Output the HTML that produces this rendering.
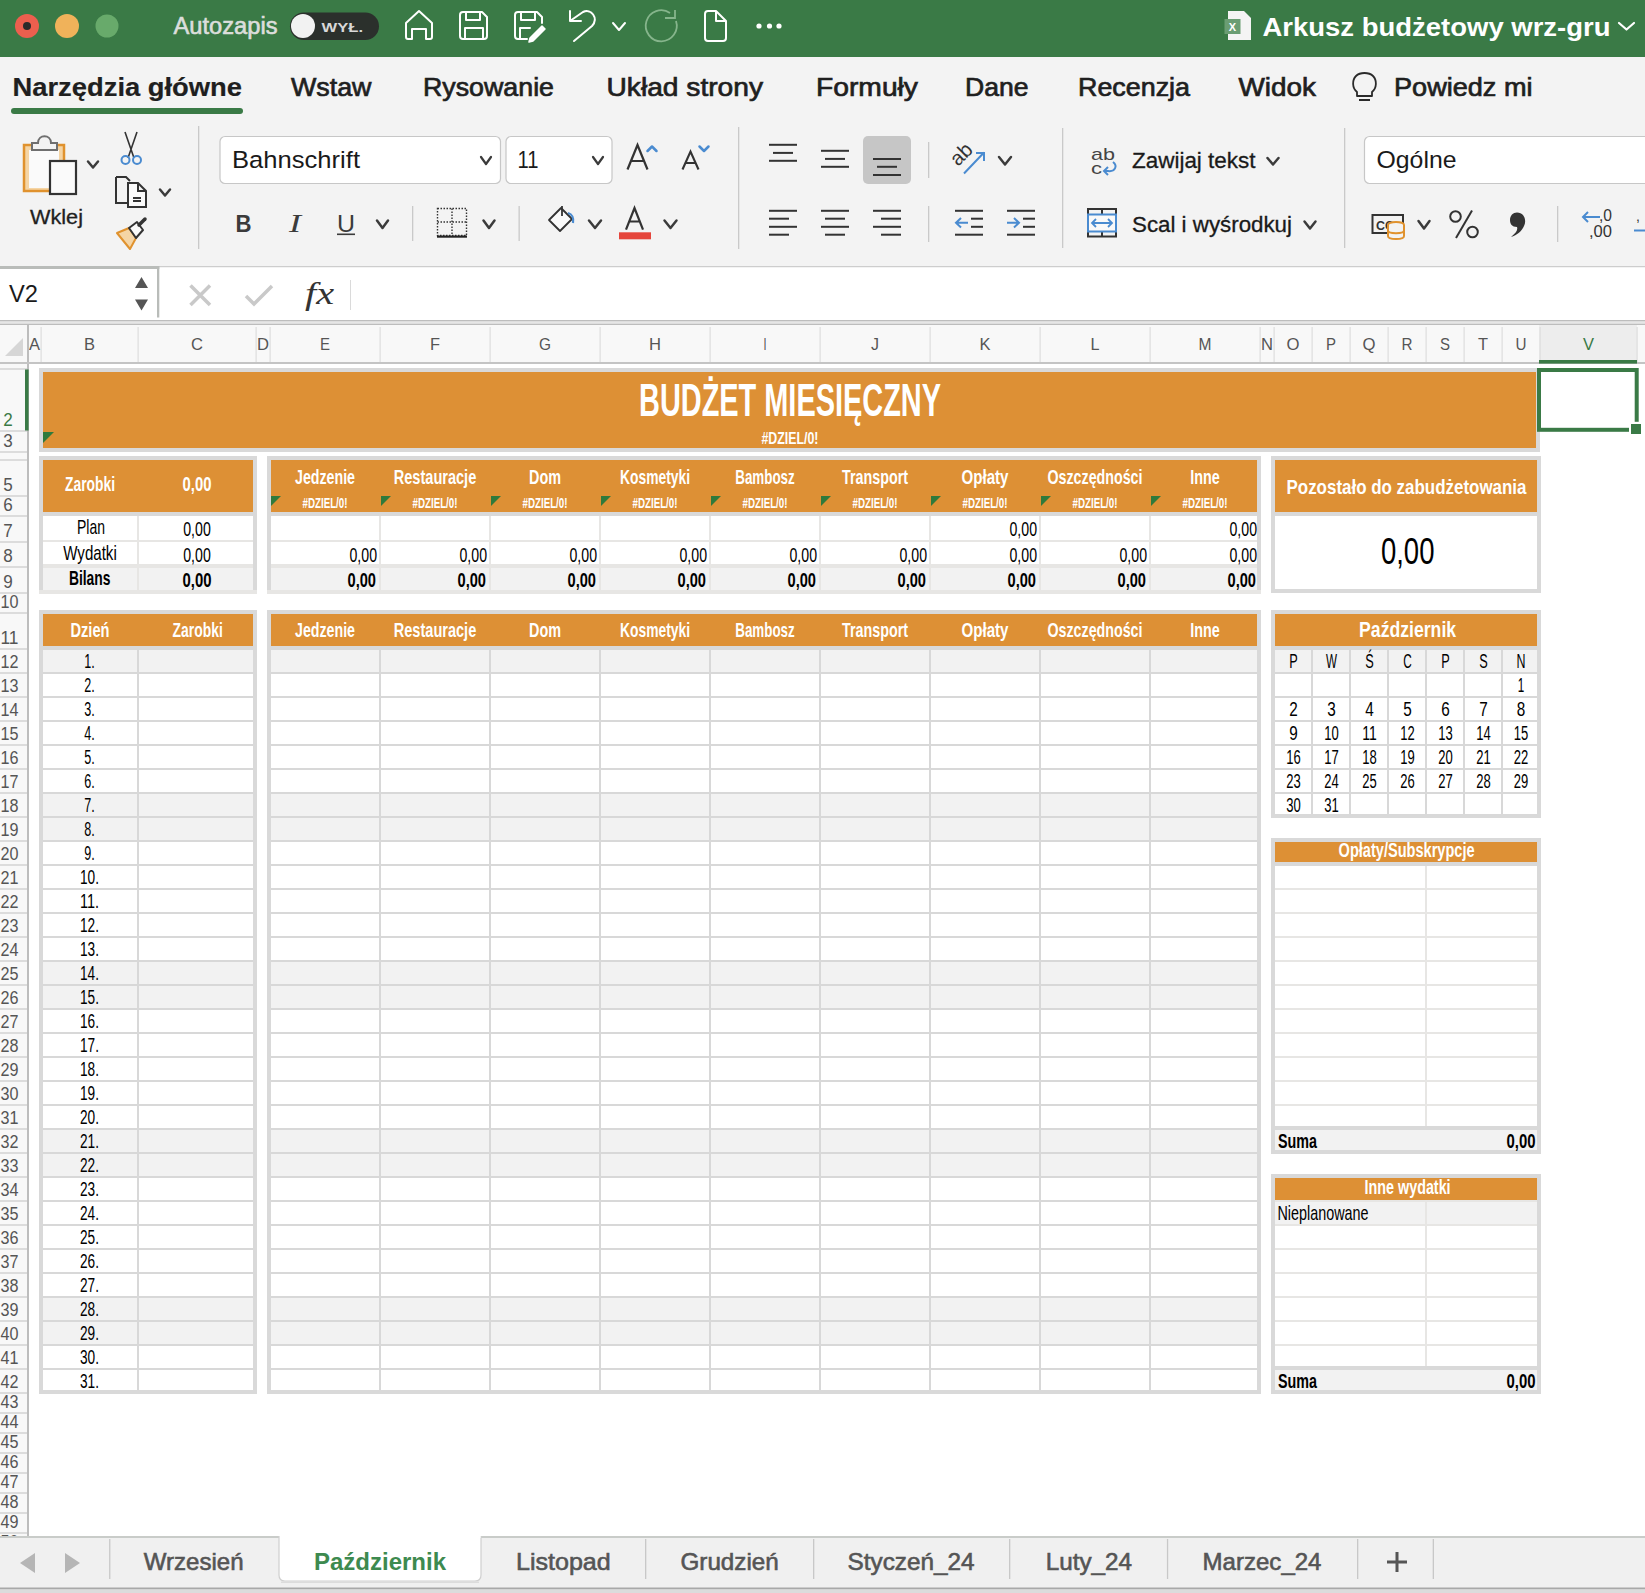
<!DOCTYPE html>
<html><head><meta charset="utf-8"><title>Excel</title>
<style>html,body{margin:0;padding:0;background:#fff;overflow:hidden;} svg{display:block;font-family:"Liberation Sans",sans-serif;}</style>
</head><body><svg width="1645" height="1593" viewBox="0 0 1645 1593"><rect x="0" y="0" width="1645" height="57" fill="#3a7a46" />
<circle cx="27" cy="26" r="12" fill="#ec5f4e"/>
<circle cx="27" cy="26" r="4" fill="#2a2a2a"/>
<circle cx="67" cy="26" r="12" fill="#f0b25a"/>
<circle cx="107" cy="26" r="11.5" fill="#68aa6b"/>
<text x="173.5" y="34" font-family="Liberation Sans" font-size="23" font-weight="normal" fill="#dcdedc" text-anchor="start" textLength="104" lengthAdjust="spacingAndGlyphs"  stroke="#dcdedc" stroke-width="0.6">Autozapis</text>
<rect x="290" y="12.5" width="89" height="27.5" rx="13.75" fill="#2b302c"/>
<circle cx="303" cy="26" r="12" fill="#f2f2f2"/>
<text x="321.5" y="31.5" font-family="Liberation Sans" font-size="13.5" font-weight="bold" fill="#d8d8d8" text-anchor="start" textLength="41.5" lengthAdjust="spacingAndGlyphs" >WYŁ.</text>
<path d="M406 23 L419 11 L432 23 V37 a2 2 0 0 1 -2 2 H426 V29 H412 V39 H408 a2 2 0 0 1 -2 -2 Z" stroke="#ffffff" stroke-width="2" fill="none" stroke-linejoin="round" stroke-linecap="round"/>
<path d="M460 15 a3 3 0 0 1 3 -3 H482 L487 17 V36 a3 3 0 0 1 -3 3 H463 a3 3 0 0 1 -3 -3 Z M466 12 V20 H480 V12 M465 39 V28 H483 V39" stroke="#ffffff" stroke-width="2" fill="none" stroke-linejoin="round" stroke-linecap="round"/>
<path d="M515 15 a3 3 0 0 1 3 -3 H537 L542 17 V23 M521 12 V20 H535 V12 M520 39 V28 H530 M518 39 a3 3 0 0 1 -3 -3 V15 M518 39 H527" stroke="#ffffff" stroke-width="2" fill="none" stroke-linejoin="round" stroke-linecap="round"/>
<path d="M530 38 L542 26 L545 29 L533 41 L529 42 Z" fill="#ffffff" stroke="#ffffff" stroke-width="1.5" stroke-linejoin="round"/>
<path d="M570 11 V21 H581 M570 21 L583 12 C591 8 599 18 592 26 L574 41" stroke="#ffffff" stroke-width="2" fill="none" stroke-linejoin="round" stroke-linecap="round"/>
<path d="M613 23 L619.0 30 L625 23" stroke="#ffffff" stroke-width="2" fill="none" stroke-linecap="round" stroke-linejoin="round"/>
<path d="M676 21 A15.5 15.5 0 1 1 670 13" stroke="#86b58c" stroke-width="1.8" fill="none"/>
<path d="M665 18 H675 V10" stroke="#86b58c" stroke-width="1.8" fill="none"/>
<path d="M705 14 a3 3 0 0 1 3 -3 H716 L726 21 V38 a3 3 0 0 1 -3 3 H708 a3 3 0 0 1 -3 -3 Z M716 11 V21 H726" stroke="#ffffff" stroke-width="2" fill="none" stroke-linejoin="round" stroke-linecap="round"/>
<circle cx="759" cy="26" r="2.6" fill="#ffffff"/>
<circle cx="769.5" cy="26" r="2.6" fill="#ffffff"/>
<circle cx="779" cy="26" r="2.6" fill="#ffffff"/>
<path d="M1228 11 H1244 L1251 18 V40 H1228 Z" fill="#f4f4f4"/>
<rect x="1224.5" y="19" width="16" height="15" fill="#6a9d73"/>
<text x="1232.5" y="31" font-family="Liberation Sans" font-size="11" font-weight="bold" fill="#ffffff" text-anchor="middle" >X</text>
<text x="1262.5" y="36" font-family="Liberation Sans" font-size="25.5" font-weight="bold" fill="#ffffff" text-anchor="start" textLength="348" lengthAdjust="spacingAndGlyphs" >Arkusz budżetowy wrz-gru</text>
<path d="M1619 23 L1626.5 29.5 L1634 23" stroke="#ffffff" stroke-width="2.2" fill="none" stroke-linecap="round" stroke-linejoin="round"/>
<rect x="0" y="57" width="1645" height="210" fill="#f3f3f3" />
<text x="12.5" y="96" font-family="Liberation Sans" font-size="25.5" font-weight="bold" fill="#1f1f1f" text-anchor="start" textLength="229.5" lengthAdjust="spacingAndGlyphs"  stroke="#1f1f1f" stroke-width="0.2">Narzędzia główne</text>
<text x="291" y="96" font-family="Liberation Sans" font-size="25.5" font-weight="normal" fill="#1f1f1f" text-anchor="start" textLength="80.5" lengthAdjust="spacingAndGlyphs"  stroke="#1f1f1f" stroke-width="0.7">Wstaw</text>
<text x="423" y="96" font-family="Liberation Sans" font-size="25.5" font-weight="normal" fill="#1f1f1f" text-anchor="start" textLength="131" lengthAdjust="spacingAndGlyphs"  stroke="#1f1f1f" stroke-width="0.7">Rysowanie</text>
<text x="606.5" y="96" font-family="Liberation Sans" font-size="25.5" font-weight="normal" fill="#1f1f1f" text-anchor="start" textLength="156.5" lengthAdjust="spacingAndGlyphs"  stroke="#1f1f1f" stroke-width="0.7">Układ strony</text>
<text x="816" y="96" font-family="Liberation Sans" font-size="25.5" font-weight="normal" fill="#1f1f1f" text-anchor="start" textLength="102" lengthAdjust="spacingAndGlyphs"  stroke="#1f1f1f" stroke-width="0.7">Formuły</text>
<text x="965" y="96" font-family="Liberation Sans" font-size="25.5" font-weight="normal" fill="#1f1f1f" text-anchor="start" textLength="63.5" lengthAdjust="spacingAndGlyphs"  stroke="#1f1f1f" stroke-width="0.7">Dane</text>
<text x="1078" y="96" font-family="Liberation Sans" font-size="25.5" font-weight="normal" fill="#1f1f1f" text-anchor="start" textLength="112" lengthAdjust="spacingAndGlyphs"  stroke="#1f1f1f" stroke-width="0.7">Recenzja</text>
<text x="1238.5" y="96" font-family="Liberation Sans" font-size="25.5" font-weight="normal" fill="#1f1f1f" text-anchor="start" textLength="77.5" lengthAdjust="spacingAndGlyphs"  stroke="#1f1f1f" stroke-width="0.7">Widok</text>
<text x="1394" y="96" font-family="Liberation Sans" font-size="25.5" font-weight="normal" fill="#1f1f1f" text-anchor="start" textLength="138.5" lengthAdjust="spacingAndGlyphs"  stroke="#1f1f1f" stroke-width="0.7">Powiedz mi</text>
<rect x="11" y="108" width="232" height="6" rx="3" fill="#3a7a46"/>
<path d="M1357 92 C1352 88 1352 80 1356 76 C1360 72 1369 72 1373 76 C1377 80 1377 88 1372 92 V96 H1357 Z M1359 100 H1370" stroke="#2a2a2a" stroke-width="1.8" fill="none" stroke-linejoin="round"/>
<rect x="198" y="126" width="1.3" height="123" fill="#c9c9c9" />
<rect x="738" y="127" width="1.3" height="122" fill="#c9c9c9" />
<rect x="1062" y="128" width="1.3" height="120" fill="#c9c9c9" />
<rect x="1344" y="128" width="1.3" height="120" fill="#c9c9c9" />
<rect x="412" y="206" width="1.3" height="35" fill="#c9c9c9" />
<rect x="518.5" y="206" width="1.3" height="35" fill="#c9c9c9" />
<rect x="928" y="142" width="1.3" height="36" fill="#c9c9c9" />
<rect x="928" y="206" width="1.3" height="36" fill="#c9c9c9" />
<rect x="1557" y="206" width="1.3" height="36" fill="#c9c9c9" />
<rect x="24" y="145" width="40" height="46" fill="#f5d5a5" stroke="#e0922e" stroke-width="2.5"/>
<rect x="29" y="150" width="30" height="38" fill="#fafafa"/>
<path d="M32 150 V143 H38 C38 134 51 134 51 143 H57 V150 Z" fill="#f3f3f3" stroke="#6f6f6f" stroke-width="2"/>
<rect x="50" y="161" width="26" height="33" fill="#fafafa" stroke="#333" stroke-width="2.2"/>
<path d="M88 161.5 L93.0 167.5 L98 161.5" stroke="#3b3b3b" stroke-width="2.5" fill="none" stroke-linecap="round" stroke-linejoin="round"/>
<text x="30" y="223.5" font-family="Liberation Sans" font-size="19.5" font-weight="normal" fill="#1f1f1f" text-anchor="start" textLength="53" lengthAdjust="spacingAndGlyphs"  stroke="#1f1f1f" stroke-width="0.3">Wklej</text>
<path d="M125 132 L134 158 M137 132 L128 158" stroke="#333" stroke-width="1.6" fill="none"/>
<circle cx="125.5" cy="160" r="4" stroke="#4a8bd0" stroke-width="2" fill="none"/>
<circle cx="137" cy="160" r="4" stroke="#4a8bd0" stroke-width="2" fill="none"/>
<path d="M116 177 H126 L130 181 M116 177 V203 H127" stroke="#333" stroke-width="2" fill="none"/>
<path d="M128 183 H138 L146 191 V207 H128 Z M138 183 V191 H146 M133 198 H141 M133 201 H141" stroke="#333" stroke-width="2" fill="#fafafa"/>
<path d="M160 189.5 L165.0 195.5 L170 189.5" stroke="#3b3b3b" stroke-width="2.5" fill="none" stroke-linecap="round" stroke-linejoin="round"/>
<path d="M117 233 L129 228 L136 238 L130 249 Z" fill="#f5d5a5" stroke="#e0922e" stroke-width="2" stroke-linejoin="round"/>
<path d="M129 228 L137 222 L143 230 L136 238 Z" fill="#fafafa" stroke="#333" stroke-width="2" stroke-linejoin="round"/>
<path d="M139 225 L145 219" stroke="#333" stroke-width="3.5" stroke-linecap="round"/>
<rect x="220" y="136.5" width="280.5" height="47" rx="5" fill="#ffffff" stroke="#c7c7c7" stroke-width="1.2"/>
<text x="232" y="168" font-family="Liberation Sans" font-size="24.5" font-weight="normal" fill="#1a1a1a" text-anchor="start" textLength="128" lengthAdjust="spacingAndGlyphs" >Bahnschrift</text>
<path d="M481 157 L486.0 164 L491 157" stroke="#3b3b3b" stroke-width="2.2" fill="none" stroke-linecap="round" stroke-linejoin="round"/>
<rect x="506" y="136.5" width="106" height="47" rx="5" fill="#ffffff" stroke="#c7c7c7" stroke-width="1.2"/>
<text x="517.5" y="168" font-family="Liberation Sans" font-size="24.5" font-weight="normal" fill="#1a1a1a" text-anchor="start" textLength="21" lengthAdjust="spacingAndGlyphs" >11</text>
<path d="M593 157 L598.0 164 L603 157" stroke="#3b3b3b" stroke-width="2.2" fill="none" stroke-linecap="round" stroke-linejoin="round"/>
<path d="M627.5 169.5 L637.5 145 L647.5 169.5 M631.2 161 H643.8" stroke="#333" stroke-width="2.2" fill="none"/>
<path d="M647.5 151 L652.0 146.5 L656.5 151" stroke="#4a8bd0" stroke-width="2.5" fill="none" stroke-linecap="round" stroke-linejoin="round"/>
<path d="M682.5 169.5 L690.5 151.5 L698.5 169.5 M685.3 163 H695.7" stroke="#333" stroke-width="2.1" fill="none"/>
<path d="M699.5 146.5 L704.0 151 L708.5 146.5" stroke="#4a8bd0" stroke-width="2.5" fill="none" stroke-linecap="round" stroke-linejoin="round"/>
<text x="235.5" y="231.5" font-family="Liberation Sans" font-size="24" font-weight="bold" fill="#3b3b3b" text-anchor="start" textLength="16" lengthAdjust="spacingAndGlyphs" >B</text>
<text x="289" y="231.5" font-family="Liberation Serif" font-size="25" font-weight="normal" fill="#3b3b3b" text-anchor="start" textLength="12" lengthAdjust="spacingAndGlyphs" font-style="italic">I</text>
<text x="337" y="231.5" font-family="Liberation Sans" font-size="24" font-weight="normal" fill="#3b3b3b" text-anchor="start" textLength="18" lengthAdjust="spacingAndGlyphs" >U</text>
<rect x="337" y="233.5" width="18" height="1.6" fill="#3b3b3b" />
<path d="M377 220.5 L382.5 228 L388 220.5" stroke="#3b3b3b" stroke-width="2.5" fill="none" stroke-linecap="round" stroke-linejoin="round"/>
<rect x="437.5" y="208.5" width="29" height="27" fill="none" stroke="#333" stroke-width="1.4" stroke-dasharray="1.5 1.5"/>
<path d="M452 208.5 V235.5 M437.5 222 H466.5" stroke="#333" stroke-width="1.4" stroke-dasharray="1.5 1.5"/>
<rect x="437" y="235.5" width="30" height="2.2" fill="#222" />
<path d="M483.5 220.5 L489.0 228 L494.5 220.5" stroke="#3b3b3b" stroke-width="2.5" fill="none" stroke-linecap="round" stroke-linejoin="round"/>
<path d="M549 220 L561 208 L572 219 L560 231 Z" fill="#fafafa" stroke="#333" stroke-width="1.8" stroke-linejoin="round"/>
<path d="M562 206 V216" stroke="#333" stroke-width="1.8"/>
<path d="M568 213 C572 214 574 218 573 223" stroke="#4a8bd0" stroke-width="2.2" fill="none"/>
<path d="M589 220.5 L595.0 228 L601 220.5" stroke="#3b3b3b" stroke-width="2.5" fill="none" stroke-linecap="round" stroke-linejoin="round"/>
<path d="M626 229.7 L634.5 208 L643 229.7 M629.2 221.5 H639.8" stroke="#333" stroke-width="2.2" fill="none"/>
<rect x="619" y="232.3" width="32" height="7" fill="#e5453b" />
<path d="M664.5 220.5 L670.5 228 L676.5 220.5" stroke="#3b3b3b" stroke-width="2.5" fill="none" stroke-linecap="round" stroke-linejoin="round"/>
<rect x="863" y="136" width="48" height="48" fill="#c6c6c6" rx="5"/>
<rect x="769" y="143.8" width="28" height="2" fill="#333" />
<rect x="773" y="151.9" width="20" height="2" fill="#333" />
<rect x="769" y="159.8" width="28" height="2" fill="#333" />
<rect x="821" y="149.8" width="28" height="2" fill="#333" />
<rect x="825" y="157.9" width="20" height="2" fill="#333" />
<rect x="821" y="165.8" width="28" height="2" fill="#333" />
<rect x="873" y="158" width="28" height="2" fill="#333" />
<rect x="877" y="165.8" width="20" height="2" fill="#333" />
<rect x="873" y="174" width="28" height="2" fill="#333" />
<rect x="769" y="209.8" width="28" height="2" fill="#333" />
<rect x="769" y="217.7" width="20" height="2" fill="#333" />
<rect x="769" y="225.8" width="28" height="2" fill="#333" />
<rect x="769" y="233.7" width="20" height="2" fill="#333" />
<rect x="821" y="209.8" width="28" height="2" fill="#333" />
<rect x="825" y="217.7" width="20" height="2" fill="#333" />
<rect x="821" y="225.8" width="28" height="2" fill="#333" />
<rect x="825" y="233.7" width="20" height="2" fill="#333" />
<rect x="873" y="209.8" width="28" height="2" fill="#333" />
<rect x="881" y="217.7" width="20" height="2" fill="#333" />
<rect x="873" y="225.8" width="28" height="2" fill="#333" />
<rect x="881" y="233.7" width="20" height="2" fill="#333" />
<rect x="955" y="209.8" width="28" height="2" fill="#333" />
<rect x="971" y="217.7" width="12" height="2" fill="#333" />
<rect x="971" y="225.8" width="12" height="2" fill="#333" />
<rect x="955" y="233.7" width="28" height="2" fill="#333" />
<path d="M968 222.8 H956 M961 218 L956 222.8 L961 227.5" stroke="#4a8bd0" stroke-width="2" fill="none"/>
<rect x="1007" y="209.8" width="28" height="2" fill="#333" />
<rect x="1023" y="217.7" width="12" height="2" fill="#333" />
<rect x="1023" y="225.8" width="12" height="2" fill="#333" />
<rect x="1007" y="233.7" width="28" height="2" fill="#333" />
<path d="M1007 222.8 H1019 M1014 218 L1019 222.8 L1014 227.5" stroke="#4a8bd0" stroke-width="2" fill="none"/>
<text x="0" y="0" font-family="Liberation Sans" font-size="20.5" fill="#333" transform="translate(958,167) rotate(-45)">ab</text>
<path d="M964 173.5 L984 152.5 M976 153 H984 V161" stroke="#4a8bd0" stroke-width="2" fill="none"/>
<path d="M999 157 L1005.0 164.5 L1011 157" stroke="#3b3b3b" stroke-width="2.5" fill="none" stroke-linecap="round" stroke-linejoin="round"/>
<text x="1091" y="159.5" font-family="Liberation Sans" font-size="17" font-weight="normal" fill="#444" text-anchor="start" textLength="24" lengthAdjust="spacingAndGlyphs" >ab</text>
<text x="1091" y="174" font-family="Liberation Sans" font-size="17" font-weight="normal" fill="#444" text-anchor="start" textLength="11" lengthAdjust="spacingAndGlyphs" >c</text>
<path d="M1113 162 C1118 166 1115 172 1108 171 H1104 M1108 167 L1104 171 L1108 175" stroke="#4a8bd0" stroke-width="2" fill="none"/>
<text x="1132" y="168" font-family="Liberation Sans" font-size="21.5" font-weight="normal" fill="#1a1a1a" text-anchor="start" textLength="123.5" lengthAdjust="spacingAndGlyphs"  stroke="#1a1a1a" stroke-width="0.3">Zawijaj tekst</text>
<path d="M1267.5 158 L1273.0 164.5 L1278.5 158" stroke="#3b3b3b" stroke-width="2.5" fill="none" stroke-linecap="round" stroke-linejoin="round"/>
<rect x="1088" y="209" width="28" height="27.5" fill="none" stroke="#333" stroke-width="2"/>
<path d="M1102 209 V214 M1102 231.5 V236.5" stroke="#333" stroke-width="2"/>
<rect x="1088" y="214.5" width="28" height="17" fill="#f9f9f9" stroke="#4a8bd0" stroke-width="2"/>
<path d="M1092 223 H1112 M1096 219 L1092 223 L1096 227 M1108 219 L1112 223 L1108 227" stroke="#4a8bd0" stroke-width="1.8" fill="none"/>
<text x="1132" y="231.7" font-family="Liberation Sans" font-size="21.5" font-weight="normal" fill="#1a1a1a" text-anchor="start" textLength="160" lengthAdjust="spacingAndGlyphs"  stroke="#1a1a1a" stroke-width="0.3">Scal i wyśrodkuj</text>
<path d="M1304.5 221.5 L1310.0 228.5 L1315.5 221.5" stroke="#3b3b3b" stroke-width="2.5" fill="none" stroke-linecap="round" stroke-linejoin="round"/>
<rect x="1364.5" y="136.5" width="300" height="47" rx="5" fill="#ffffff" stroke="#c7c7c7" stroke-width="1.2"/>
<text x="1376.5" y="168" font-family="Liberation Sans" font-size="24.5" font-weight="normal" fill="#1a1a1a" text-anchor="start" textLength="80" lengthAdjust="spacingAndGlyphs" >Ogólne</text>
<rect x="1372.5" y="215" width="30.5" height="18" fill="none" stroke="#333" stroke-width="2"/>
<text x="1376" y="230" font-family="Liberation Sans" font-size="12" font-weight="bold" fill="#333" text-anchor="start" textLength="18" lengthAdjust="spacingAndGlyphs" >CC</text>
<ellipse cx="1396" cy="225" rx="8" ry="3" fill="#f3f3f3" stroke="#e0922e" stroke-width="2"/>
<path d="M1388 225 V236 C1388 240 1404 240 1404 236 V225 M1388 230.5 C1388 234 1404 234 1404 230.5" stroke="#e0922e" stroke-width="2" fill="#f3f3f3"/>
<path d="M1418.5 221 L1424.0 228.5 L1429.5 221" stroke="#3b3b3b" stroke-width="2.5" fill="none" stroke-linecap="round" stroke-linejoin="round"/>
<circle cx="1455.5" cy="216.5" r="5.3" stroke="#333" stroke-width="2" fill="none"/><circle cx="1472.5" cy="232" r="5.3" stroke="#333" stroke-width="2" fill="none"/><path d="M1472 210.5 L1456 238" stroke="#333" stroke-width="2"/>
<path d="M1517 212.5 C1524 212.5 1527 220 1524 226 C1522 231 1517 235 1511 237 C1516 233 1518 230 1517 227 C1512 227 1510 224 1510 220 C1510 215.5 1513 212.5 1517 212.5 Z" fill="#333"/>
<path d="M1600 217 H1583 M1588 212 L1583 217 L1588 222" stroke="#4a8bd0" stroke-width="2" fill="none"/>
<text x="1599" y="220.6" font-family="Liberation Sans" font-size="17" font-weight="normal" fill="#333" text-anchor="start" textLength="13" lengthAdjust="spacingAndGlyphs" >,0</text>
<text x="1589" y="237.4" font-family="Liberation Sans" font-size="17" font-weight="normal" fill="#333" text-anchor="start" textLength="23" lengthAdjust="spacingAndGlyphs" >,00</text>
<path d="M1634 230.5 H1645" stroke="#4a8bd0" stroke-width="2" fill="none"/>
<text x="1636" y="221" font-family="Liberation Sans" font-size="14" font-weight="normal" fill="#333" text-anchor="start" >,</text>
<rect x="0" y="266" width="1645" height="1.5" fill="#cdcdcd" />
<rect x="0" y="267.5" width="1645" height="53" fill="#ffffff" />
<rect x="0" y="266" width="159.3" height="3" fill="#b9bcb9" />
<rect x="157" y="266" width="2.3" height="51.5" fill="#b9bcb9" />
<text x="9" y="301.5" font-family="Liberation Sans" font-size="24" font-weight="normal" fill="#1a1a1a" text-anchor="start" textLength="29" lengthAdjust="spacingAndGlyphs" >V2</text>
<path d="M135 288 L141.5 277 L148 288 Z M135 299.5 L141.5 310.5 L148 299.5 Z" fill="#555"/>
<path d="M190.5 285.5 L210 305 M210 285.5 L190.5 305" stroke="#c9c9c9" stroke-width="3.5"/>
<path d="M246 296 L254 304 L272 286" stroke="#c9c9c9" stroke-width="3.5" fill="none"/>
<text x="305" y="304" font-family="Liberation Serif" font-size="32" font-weight="normal" fill="#333" text-anchor="start" textLength="29" lengthAdjust="spacingAndGlyphs" font-style="italic">fx</text>
<rect x="350" y="280" width="1" height="30" fill="#dadada" />
<rect x="0" y="320" width="1645" height="5" fill="#e6e6e6" />
<rect x="0" y="320" width="1645" height="1.2" fill="#bdbdbd" />
<rect x="0" y="323.8" width="1645" height="1.2" fill="#bdbdbd" />
<rect x="0" y="325" width="1645" height="37" fill="#f8f8f8" />
<rect x="1539" y="325" width="98" height="35" fill="#ededed" />
<rect x="40.5" y="327" width="1.2" height="35" fill="#dddddd" />
<rect x="137.5" y="327" width="1.2" height="35" fill="#dddddd" />
<rect x="255.5" y="327" width="1.2" height="35" fill="#dddddd" />
<rect x="269.5" y="327" width="1.2" height="35" fill="#dddddd" />
<rect x="379.5" y="327" width="1.2" height="35" fill="#dddddd" />
<rect x="489.5" y="327" width="1.2" height="35" fill="#dddddd" />
<rect x="599.5" y="327" width="1.2" height="35" fill="#dddddd" />
<rect x="709.5" y="327" width="1.2" height="35" fill="#dddddd" />
<rect x="819.5" y="327" width="1.2" height="35" fill="#dddddd" />
<rect x="929.5" y="327" width="1.2" height="35" fill="#dddddd" />
<rect x="1039.5" y="327" width="1.2" height="35" fill="#dddddd" />
<rect x="1149.5" y="327" width="1.2" height="35" fill="#dddddd" />
<rect x="1259.5" y="327" width="1.2" height="35" fill="#dddddd" />
<rect x="1273.5" y="327" width="1.2" height="35" fill="#dddddd" />
<rect x="1311.5" y="327" width="1.2" height="35" fill="#dddddd" />
<rect x="1349.5" y="327" width="1.2" height="35" fill="#dddddd" />
<rect x="1387.5" y="327" width="1.2" height="35" fill="#dddddd" />
<rect x="1425.5" y="327" width="1.2" height="35" fill="#dddddd" />
<rect x="1463.5" y="327" width="1.2" height="35" fill="#dddddd" />
<rect x="1501.5" y="327" width="1.2" height="35" fill="#dddddd" />
<rect x="1539.5" y="327" width="1.2" height="35" fill="#dddddd" />
<rect x="1636.5" y="327" width="1.2" height="35" fill="#dddddd" />
<text x="34.5" y="349.7" font-family="Liberation Sans" font-size="17" font-weight="normal" fill="#555555" text-anchor="middle" textLength="11" lengthAdjust="spacingAndGlyphs" >A</text>
<text x="89.5" y="349.7" font-family="Liberation Sans" font-size="17" font-weight="normal" fill="#555555" text-anchor="middle" textLength="11" lengthAdjust="spacingAndGlyphs" >B</text>
<text x="197.0" y="349.7" font-family="Liberation Sans" font-size="17" font-weight="normal" fill="#555555" text-anchor="middle" textLength="12" lengthAdjust="spacingAndGlyphs" >C</text>
<text x="263.0" y="349.7" font-family="Liberation Sans" font-size="17" font-weight="normal" fill="#555555" text-anchor="middle" textLength="12" lengthAdjust="spacingAndGlyphs" >D</text>
<text x="325.0" y="349.7" font-family="Liberation Sans" font-size="17" font-weight="normal" fill="#555555" text-anchor="middle" textLength="10" lengthAdjust="spacingAndGlyphs" >E</text>
<text x="435.0" y="349.7" font-family="Liberation Sans" font-size="17" font-weight="normal" fill="#555555" text-anchor="middle" textLength="10" lengthAdjust="spacingAndGlyphs" >F</text>
<text x="545.0" y="349.7" font-family="Liberation Sans" font-size="17" font-weight="normal" fill="#555555" text-anchor="middle" textLength="12" lengthAdjust="spacingAndGlyphs" >G</text>
<text x="655.0" y="349.7" font-family="Liberation Sans" font-size="17" font-weight="normal" fill="#555555" text-anchor="middle" textLength="12" lengthAdjust="spacingAndGlyphs" >H</text>
<text x="765.0" y="349.7" font-family="Liberation Sans" font-size="17" font-weight="normal" fill="#555555" text-anchor="middle" textLength="3" lengthAdjust="spacingAndGlyphs" >I</text>
<text x="875.0" y="349.7" font-family="Liberation Sans" font-size="17" font-weight="normal" fill="#555555" text-anchor="middle" textLength="8" lengthAdjust="spacingAndGlyphs" >J</text>
<text x="985.0" y="349.7" font-family="Liberation Sans" font-size="17" font-weight="normal" fill="#555555" text-anchor="middle" textLength="11" lengthAdjust="spacingAndGlyphs" >K</text>
<text x="1095.0" y="349.7" font-family="Liberation Sans" font-size="17" font-weight="normal" fill="#555555" text-anchor="middle" textLength="9" lengthAdjust="spacingAndGlyphs" >L</text>
<text x="1205.0" y="349.7" font-family="Liberation Sans" font-size="17" font-weight="normal" fill="#555555" text-anchor="middle" textLength="13" lengthAdjust="spacingAndGlyphs" >M</text>
<text x="1267.0" y="349.7" font-family="Liberation Sans" font-size="17" font-weight="normal" fill="#555555" text-anchor="middle" textLength="12" lengthAdjust="spacingAndGlyphs" >N</text>
<text x="1293.0" y="349.7" font-family="Liberation Sans" font-size="17" font-weight="normal" fill="#555555" text-anchor="middle" textLength="13" lengthAdjust="spacingAndGlyphs" >O</text>
<text x="1331.0" y="349.7" font-family="Liberation Sans" font-size="17" font-weight="normal" fill="#555555" text-anchor="middle" textLength="10" lengthAdjust="spacingAndGlyphs" >P</text>
<text x="1369.0" y="349.7" font-family="Liberation Sans" font-size="17" font-weight="normal" fill="#555555" text-anchor="middle" textLength="13" lengthAdjust="spacingAndGlyphs" >Q</text>
<text x="1407.0" y="349.7" font-family="Liberation Sans" font-size="17" font-weight="normal" fill="#555555" text-anchor="middle" textLength="11" lengthAdjust="spacingAndGlyphs" >R</text>
<text x="1445.0" y="349.7" font-family="Liberation Sans" font-size="17" font-weight="normal" fill="#555555" text-anchor="middle" textLength="10" lengthAdjust="spacingAndGlyphs" >S</text>
<text x="1483.0" y="349.7" font-family="Liberation Sans" font-size="17" font-weight="normal" fill="#555555" text-anchor="middle" textLength="10" lengthAdjust="spacingAndGlyphs" >T</text>
<text x="1521.0" y="349.7" font-family="Liberation Sans" font-size="17" font-weight="normal" fill="#555555" text-anchor="middle" textLength="11" lengthAdjust="spacingAndGlyphs" >U</text>
<text x="1588.5" y="349.7" font-family="Liberation Sans" font-size="17" font-weight="normal" fill="#3a7a46" text-anchor="middle" textLength="11" lengthAdjust="spacingAndGlyphs" >V</text>
<path d="M5 356 L23 338 L23 356 Z" fill="#d6d6d6"/>
<rect x="27" y="325" width="2" height="37" fill="#bdbdbd" />
<rect x="0" y="362" width="1645" height="2" fill="#c4c4c4" />
<rect x="1539" y="360" width="98" height="3.6" fill="#3a7a46" />
<rect x="0" y="364" width="1645" height="1172" fill="#ffffff" />
<rect x="0" y="364" width="27" height="1172" fill="#f8f8f8" />
<rect x="0" y="368" width="27" height="2" fill="#dcdcdc" />
<rect x="0" y="430" width="27" height="2" fill="#dcdcdc" />
<rect x="0" y="451" width="27" height="2" fill="#dcdcdc" />
<rect x="0" y="459" width="27" height="2" fill="#dcdcdc" />
<rect x="0" y="495" width="27" height="2" fill="#dcdcdc" />
<rect x="0" y="515" width="27" height="2" fill="#dcdcdc" />
<rect x="0" y="541" width="27" height="2" fill="#dcdcdc" />
<rect x="0" y="566" width="27" height="2" fill="#dcdcdc" />
<rect x="0" y="592" width="27" height="2" fill="#dcdcdc" />
<rect x="0" y="612" width="27" height="2" fill="#dcdcdc" />
<rect x="0" y="648" width="27" height="2" fill="#dcdcdc" />
<rect x="0" y="672" width="27" height="2" fill="#dcdcdc" />
<rect x="0" y="696" width="27" height="2" fill="#dcdcdc" />
<rect x="0" y="720" width="27" height="2" fill="#dcdcdc" />
<rect x="0" y="744" width="27" height="2" fill="#dcdcdc" />
<rect x="0" y="768" width="27" height="2" fill="#dcdcdc" />
<rect x="0" y="792" width="27" height="2" fill="#dcdcdc" />
<rect x="0" y="816" width="27" height="2" fill="#dcdcdc" />
<rect x="0" y="840" width="27" height="2" fill="#dcdcdc" />
<rect x="0" y="864" width="27" height="2" fill="#dcdcdc" />
<rect x="0" y="888" width="27" height="2" fill="#dcdcdc" />
<rect x="0" y="912" width="27" height="2" fill="#dcdcdc" />
<rect x="0" y="936" width="27" height="2" fill="#dcdcdc" />
<rect x="0" y="960" width="27" height="2" fill="#dcdcdc" />
<rect x="0" y="984" width="27" height="2" fill="#dcdcdc" />
<rect x="0" y="1008" width="27" height="2" fill="#dcdcdc" />
<rect x="0" y="1032" width="27" height="2" fill="#dcdcdc" />
<rect x="0" y="1056" width="27" height="2" fill="#dcdcdc" />
<rect x="0" y="1080" width="27" height="2" fill="#dcdcdc" />
<rect x="0" y="1104" width="27" height="2" fill="#dcdcdc" />
<rect x="0" y="1128" width="27" height="2" fill="#dcdcdc" />
<rect x="0" y="1152" width="27" height="2" fill="#dcdcdc" />
<rect x="0" y="1176" width="27" height="2" fill="#dcdcdc" />
<rect x="0" y="1200" width="27" height="2" fill="#dcdcdc" />
<rect x="0" y="1224" width="27" height="2" fill="#dcdcdc" />
<rect x="0" y="1248" width="27" height="2" fill="#dcdcdc" />
<rect x="0" y="1272" width="27" height="2" fill="#dcdcdc" />
<rect x="0" y="1296" width="27" height="2" fill="#dcdcdc" />
<rect x="0" y="1320" width="27" height="2" fill="#dcdcdc" />
<rect x="0" y="1344" width="27" height="2" fill="#dcdcdc" />
<rect x="0" y="1368" width="27" height="2" fill="#dcdcdc" />
<rect x="0" y="1392" width="27" height="2" fill="#dcdcdc" />
<rect x="0" y="1412" width="27" height="2" fill="#dcdcdc" />
<rect x="0" y="1432" width="27" height="2" fill="#dcdcdc" />
<rect x="0" y="1452" width="27" height="2" fill="#dcdcdc" />
<rect x="0" y="1472" width="27" height="2" fill="#dcdcdc" />
<rect x="0" y="1492" width="27" height="2" fill="#dcdcdc" />
<rect x="0" y="1512" width="27" height="2" fill="#dcdcdc" />
<rect x="0" y="1532" width="27" height="2" fill="#dcdcdc" />
<text x="8" y="425.5" font-family="Liberation Sans" font-size="18" font-weight="normal" fill="#3a7a46" text-anchor="middle" textLength="9.5" lengthAdjust="spacingAndGlyphs" >2</text>
<text x="8" y="446.5" font-family="Liberation Sans" font-size="18" font-weight="normal" fill="#555555" text-anchor="middle" textLength="9.5" lengthAdjust="spacingAndGlyphs" >3</text>
<text x="8" y="490.5" font-family="Liberation Sans" font-size="18" font-weight="normal" fill="#555555" text-anchor="middle" textLength="9.5" lengthAdjust="spacingAndGlyphs" >5</text>
<text x="8" y="510.5" font-family="Liberation Sans" font-size="18" font-weight="normal" fill="#555555" text-anchor="middle" textLength="9.5" lengthAdjust="spacingAndGlyphs" >6</text>
<text x="8" y="536.5" font-family="Liberation Sans" font-size="18" font-weight="normal" fill="#555555" text-anchor="middle" textLength="9.5" lengthAdjust="spacingAndGlyphs" >7</text>
<text x="8" y="561.5" font-family="Liberation Sans" font-size="18" font-weight="normal" fill="#555555" text-anchor="middle" textLength="9.5" lengthAdjust="spacingAndGlyphs" >8</text>
<text x="8" y="587.5" font-family="Liberation Sans" font-size="18" font-weight="normal" fill="#555555" text-anchor="middle" textLength="9.5" lengthAdjust="spacingAndGlyphs" >9</text>
<text x="9.5" y="607.5" font-family="Liberation Sans" font-size="18" font-weight="normal" fill="#555555" text-anchor="middle" textLength="18" lengthAdjust="spacingAndGlyphs" >10</text>
<text x="9.5" y="643.5" font-family="Liberation Sans" font-size="18" font-weight="normal" fill="#555555" text-anchor="middle" textLength="18" lengthAdjust="spacingAndGlyphs" >11</text>
<text x="9.5" y="667.5" font-family="Liberation Sans" font-size="18" font-weight="normal" fill="#555555" text-anchor="middle" textLength="18" lengthAdjust="spacingAndGlyphs" >12</text>
<text x="9.5" y="691.5" font-family="Liberation Sans" font-size="18" font-weight="normal" fill="#555555" text-anchor="middle" textLength="18" lengthAdjust="spacingAndGlyphs" >13</text>
<text x="9.5" y="715.5" font-family="Liberation Sans" font-size="18" font-weight="normal" fill="#555555" text-anchor="middle" textLength="18" lengthAdjust="spacingAndGlyphs" >14</text>
<text x="9.5" y="739.5" font-family="Liberation Sans" font-size="18" font-weight="normal" fill="#555555" text-anchor="middle" textLength="18" lengthAdjust="spacingAndGlyphs" >15</text>
<text x="9.5" y="763.5" font-family="Liberation Sans" font-size="18" font-weight="normal" fill="#555555" text-anchor="middle" textLength="18" lengthAdjust="spacingAndGlyphs" >16</text>
<text x="9.5" y="787.5" font-family="Liberation Sans" font-size="18" font-weight="normal" fill="#555555" text-anchor="middle" textLength="18" lengthAdjust="spacingAndGlyphs" >17</text>
<text x="9.5" y="811.5" font-family="Liberation Sans" font-size="18" font-weight="normal" fill="#555555" text-anchor="middle" textLength="18" lengthAdjust="spacingAndGlyphs" >18</text>
<text x="9.5" y="835.5" font-family="Liberation Sans" font-size="18" font-weight="normal" fill="#555555" text-anchor="middle" textLength="18" lengthAdjust="spacingAndGlyphs" >19</text>
<text x="9.5" y="859.5" font-family="Liberation Sans" font-size="18" font-weight="normal" fill="#555555" text-anchor="middle" textLength="18" lengthAdjust="spacingAndGlyphs" >20</text>
<text x="9.5" y="883.5" font-family="Liberation Sans" font-size="18" font-weight="normal" fill="#555555" text-anchor="middle" textLength="18" lengthAdjust="spacingAndGlyphs" >21</text>
<text x="9.5" y="907.5" font-family="Liberation Sans" font-size="18" font-weight="normal" fill="#555555" text-anchor="middle" textLength="18" lengthAdjust="spacingAndGlyphs" >22</text>
<text x="9.5" y="931.5" font-family="Liberation Sans" font-size="18" font-weight="normal" fill="#555555" text-anchor="middle" textLength="18" lengthAdjust="spacingAndGlyphs" >23</text>
<text x="9.5" y="955.5" font-family="Liberation Sans" font-size="18" font-weight="normal" fill="#555555" text-anchor="middle" textLength="18" lengthAdjust="spacingAndGlyphs" >24</text>
<text x="9.5" y="979.5" font-family="Liberation Sans" font-size="18" font-weight="normal" fill="#555555" text-anchor="middle" textLength="18" lengthAdjust="spacingAndGlyphs" >25</text>
<text x="9.5" y="1003.5" font-family="Liberation Sans" font-size="18" font-weight="normal" fill="#555555" text-anchor="middle" textLength="18" lengthAdjust="spacingAndGlyphs" >26</text>
<text x="9.5" y="1027.5" font-family="Liberation Sans" font-size="18" font-weight="normal" fill="#555555" text-anchor="middle" textLength="18" lengthAdjust="spacingAndGlyphs" >27</text>
<text x="9.5" y="1051.5" font-family="Liberation Sans" font-size="18" font-weight="normal" fill="#555555" text-anchor="middle" textLength="18" lengthAdjust="spacingAndGlyphs" >28</text>
<text x="9.5" y="1075.5" font-family="Liberation Sans" font-size="18" font-weight="normal" fill="#555555" text-anchor="middle" textLength="18" lengthAdjust="spacingAndGlyphs" >29</text>
<text x="9.5" y="1099.5" font-family="Liberation Sans" font-size="18" font-weight="normal" fill="#555555" text-anchor="middle" textLength="18" lengthAdjust="spacingAndGlyphs" >30</text>
<text x="9.5" y="1123.5" font-family="Liberation Sans" font-size="18" font-weight="normal" fill="#555555" text-anchor="middle" textLength="18" lengthAdjust="spacingAndGlyphs" >31</text>
<text x="9.5" y="1147.5" font-family="Liberation Sans" font-size="18" font-weight="normal" fill="#555555" text-anchor="middle" textLength="18" lengthAdjust="spacingAndGlyphs" >32</text>
<text x="9.5" y="1171.5" font-family="Liberation Sans" font-size="18" font-weight="normal" fill="#555555" text-anchor="middle" textLength="18" lengthAdjust="spacingAndGlyphs" >33</text>
<text x="9.5" y="1195.5" font-family="Liberation Sans" font-size="18" font-weight="normal" fill="#555555" text-anchor="middle" textLength="18" lengthAdjust="spacingAndGlyphs" >34</text>
<text x="9.5" y="1219.5" font-family="Liberation Sans" font-size="18" font-weight="normal" fill="#555555" text-anchor="middle" textLength="18" lengthAdjust="spacingAndGlyphs" >35</text>
<text x="9.5" y="1243.5" font-family="Liberation Sans" font-size="18" font-weight="normal" fill="#555555" text-anchor="middle" textLength="18" lengthAdjust="spacingAndGlyphs" >36</text>
<text x="9.5" y="1267.5" font-family="Liberation Sans" font-size="18" font-weight="normal" fill="#555555" text-anchor="middle" textLength="18" lengthAdjust="spacingAndGlyphs" >37</text>
<text x="9.5" y="1291.5" font-family="Liberation Sans" font-size="18" font-weight="normal" fill="#555555" text-anchor="middle" textLength="18" lengthAdjust="spacingAndGlyphs" >38</text>
<text x="9.5" y="1315.5" font-family="Liberation Sans" font-size="18" font-weight="normal" fill="#555555" text-anchor="middle" textLength="18" lengthAdjust="spacingAndGlyphs" >39</text>
<text x="9.5" y="1339.5" font-family="Liberation Sans" font-size="18" font-weight="normal" fill="#555555" text-anchor="middle" textLength="18" lengthAdjust="spacingAndGlyphs" >40</text>
<text x="9.5" y="1363.5" font-family="Liberation Sans" font-size="18" font-weight="normal" fill="#555555" text-anchor="middle" textLength="18" lengthAdjust="spacingAndGlyphs" >41</text>
<text x="9.5" y="1387.5" font-family="Liberation Sans" font-size="18" font-weight="normal" fill="#555555" text-anchor="middle" textLength="18" lengthAdjust="spacingAndGlyphs" >42</text>
<text x="9.5" y="1407.5" font-family="Liberation Sans" font-size="18" font-weight="normal" fill="#555555" text-anchor="middle" textLength="18" lengthAdjust="spacingAndGlyphs" >43</text>
<text x="9.5" y="1427.5" font-family="Liberation Sans" font-size="18" font-weight="normal" fill="#555555" text-anchor="middle" textLength="18" lengthAdjust="spacingAndGlyphs" >44</text>
<text x="9.5" y="1447.5" font-family="Liberation Sans" font-size="18" font-weight="normal" fill="#555555" text-anchor="middle" textLength="18" lengthAdjust="spacingAndGlyphs" >45</text>
<text x="9.5" y="1467.5" font-family="Liberation Sans" font-size="18" font-weight="normal" fill="#555555" text-anchor="middle" textLength="18" lengthAdjust="spacingAndGlyphs" >46</text>
<text x="9.5" y="1487.5" font-family="Liberation Sans" font-size="18" font-weight="normal" fill="#555555" text-anchor="middle" textLength="18" lengthAdjust="spacingAndGlyphs" >47</text>
<text x="9.5" y="1507.5" font-family="Liberation Sans" font-size="18" font-weight="normal" fill="#555555" text-anchor="middle" textLength="18" lengthAdjust="spacingAndGlyphs" >48</text>
<text x="9.5" y="1527.5" font-family="Liberation Sans" font-size="18" font-weight="normal" fill="#555555" text-anchor="middle" textLength="18" lengthAdjust="spacingAndGlyphs" >49</text>
<text x="9.5" y="1547.5" font-family="Liberation Sans" font-size="18" font-weight="normal" fill="#555555" text-anchor="middle" textLength="18" lengthAdjust="spacingAndGlyphs" >50</text>
<rect x="27" y="364" width="2" height="1172" fill="#bdbdbd" />
<rect x="25" y="369.5" width="3.6" height="61" fill="#3a7a46" />
<rect x="39" y="368" width="1501" height="84" fill="#d9d9d9" />
<rect x="43" y="372" width="1493" height="76" fill="#dd9035" />
<text x="790" y="415.6" font-family="Liberation Sans" font-size="47" font-weight="bold" fill="#ffffff" text-anchor="middle" textLength="302" lengthAdjust="spacingAndGlyphs" >BUDŻET MIESIĘCZNY</text>
<text x="790" y="444" font-family="Liberation Sans" font-size="16.5" font-weight="bold" fill="#ffffff" text-anchor="middle" textLength="57" lengthAdjust="spacingAndGlyphs" >#DZIEL/0!</text>
<path d="M43 432 L54 432 L43 443 Z" fill="#2f7a3c"/>
<rect x="39" y="456" width="218" height="138" fill="#d9d9d9" />
<rect x="43" y="460" width="210" height="52" fill="#dd9035" />
<rect x="43" y="516" width="210" height="74" fill="#e7e6e4" />
<rect x="39" y="590" width="218" height="4" fill="#e7e6e4" />
<rect x="43" y="516" width="94" height="24" fill="#fff" />
<rect x="139" y="516" width="114" height="24" fill="#fff" />
<rect x="43" y="542" width="94" height="22" fill="#fff" />
<rect x="139" y="542" width="114" height="22" fill="#fff" />
<rect x="43" y="568" width="94" height="22" fill="#f2f2f2" />
<rect x="139" y="568" width="114" height="22" fill="#f2f2f2" />
<text x="90" y="491.4" font-family="Liberation Sans" font-size="20.5" font-weight="bold" fill="#fff" text-anchor="middle" textLength="50" lengthAdjust="spacingAndGlyphs" >Zarobki</text>
<text x="197" y="491.4" font-family="Liberation Sans" font-size="20.5" font-weight="bold" fill="#fff" text-anchor="middle" textLength="29" lengthAdjust="spacingAndGlyphs" >0,00</text>
<text x="91" y="534.3" font-family="Liberation Sans" font-size="20.3" font-weight="normal" fill="#000" text-anchor="middle" textLength="28" lengthAdjust="spacingAndGlyphs" >Plan</text>
<text x="197" y="535.5" font-family="Liberation Sans" font-size="20.3" font-weight="normal" fill="#000" text-anchor="middle" textLength="27.5" lengthAdjust="spacingAndGlyphs" >0,00</text>
<text x="90" y="559.5" font-family="Liberation Sans" font-size="20.3" font-weight="normal" fill="#000" text-anchor="middle" textLength="53.5" lengthAdjust="spacingAndGlyphs" >Wydatki</text>
<text x="197" y="561.5" font-family="Liberation Sans" font-size="20.3" font-weight="normal" fill="#000" text-anchor="middle" textLength="27.5" lengthAdjust="spacingAndGlyphs" >0,00</text>
<text x="89.7" y="584.8" font-family="Liberation Sans" font-size="20.5" font-weight="bold" fill="#000" text-anchor="middle" textLength="41.5" lengthAdjust="spacingAndGlyphs" >Bilans</text>
<text x="197" y="587" font-family="Liberation Sans" font-size="20.5" font-weight="bold" fill="#000" text-anchor="middle" textLength="29" lengthAdjust="spacingAndGlyphs" >0,00</text>
<rect x="267" y="456" width="994" height="138" fill="#d9d9d9" />
<rect x="271" y="460" width="986" height="52" fill="#dd9035" />
<rect x="271" y="516" width="986" height="74" fill="#e7e6e4" />
<rect x="267" y="590" width="994" height="4" fill="#e7e6e4" />
<rect x="271" y="516" width="108" height="24" fill="#fff" />
<rect x="271" y="542" width="108" height="22" fill="#fff" />
<rect x="271" y="568" width="108" height="22" fill="#f2f2f2" />
<text x="325.0" y="483.6" font-family="Liberation Sans" font-size="20.5" font-weight="bold" fill="#fff" text-anchor="middle" textLength="60" lengthAdjust="spacingAndGlyphs" >Jedzenie</text>
<text x="325.0" y="507.8" font-family="Liberation Sans" font-size="14.5" font-weight="bold" fill="#fff" text-anchor="middle" textLength="45" lengthAdjust="spacingAndGlyphs" >#DZIEL/0!</text>
<path d="M271 496 L281 496 L271 506 Z" fill="#2f7a3c"/>
<text x="377" y="562" font-family="Liberation Sans" font-size="20.3" font-weight="normal" fill="#000" text-anchor="end" textLength="27.5" lengthAdjust="spacingAndGlyphs" >0,00</text>
<text x="376" y="587.3" font-family="Liberation Sans" font-size="20.5" font-weight="bold" fill="#000" text-anchor="end" textLength="28.5" lengthAdjust="spacingAndGlyphs" >0,00</text>
<rect x="381" y="516" width="108" height="24" fill="#fff" />
<rect x="381" y="542" width="108" height="22" fill="#fff" />
<rect x="381" y="568" width="108" height="22" fill="#f2f2f2" />
<text x="435.0" y="483.6" font-family="Liberation Sans" font-size="20.5" font-weight="bold" fill="#fff" text-anchor="middle" textLength="82.5" lengthAdjust="spacingAndGlyphs" >Restauracje</text>
<text x="435.0" y="507.8" font-family="Liberation Sans" font-size="14.5" font-weight="bold" fill="#fff" text-anchor="middle" textLength="45" lengthAdjust="spacingAndGlyphs" >#DZIEL/0!</text>
<path d="M381 496 L391 496 L381 506 Z" fill="#2f7a3c"/>
<text x="487" y="562" font-family="Liberation Sans" font-size="20.3" font-weight="normal" fill="#000" text-anchor="end" textLength="27.5" lengthAdjust="spacingAndGlyphs" >0,00</text>
<text x="486" y="587.3" font-family="Liberation Sans" font-size="20.5" font-weight="bold" fill="#000" text-anchor="end" textLength="28.5" lengthAdjust="spacingAndGlyphs" >0,00</text>
<rect x="491" y="516" width="108" height="24" fill="#fff" />
<rect x="491" y="542" width="108" height="22" fill="#fff" />
<rect x="491" y="568" width="108" height="22" fill="#f2f2f2" />
<text x="545.0" y="483.6" font-family="Liberation Sans" font-size="20.5" font-weight="bold" fill="#fff" text-anchor="middle" textLength="32" lengthAdjust="spacingAndGlyphs" >Dom</text>
<text x="545.0" y="507.8" font-family="Liberation Sans" font-size="14.5" font-weight="bold" fill="#fff" text-anchor="middle" textLength="45" lengthAdjust="spacingAndGlyphs" >#DZIEL/0!</text>
<path d="M491 496 L501 496 L491 506 Z" fill="#2f7a3c"/>
<text x="597" y="562" font-family="Liberation Sans" font-size="20.3" font-weight="normal" fill="#000" text-anchor="end" textLength="27.5" lengthAdjust="spacingAndGlyphs" >0,00</text>
<text x="596" y="587.3" font-family="Liberation Sans" font-size="20.5" font-weight="bold" fill="#000" text-anchor="end" textLength="28.5" lengthAdjust="spacingAndGlyphs" >0,00</text>
<rect x="601" y="516" width="108" height="24" fill="#fff" />
<rect x="601" y="542" width="108" height="22" fill="#fff" />
<rect x="601" y="568" width="108" height="22" fill="#f2f2f2" />
<text x="655.0" y="483.6" font-family="Liberation Sans" font-size="20.5" font-weight="bold" fill="#fff" text-anchor="middle" textLength="70" lengthAdjust="spacingAndGlyphs" >Kosmetyki</text>
<text x="655.0" y="507.8" font-family="Liberation Sans" font-size="14.5" font-weight="bold" fill="#fff" text-anchor="middle" textLength="45" lengthAdjust="spacingAndGlyphs" >#DZIEL/0!</text>
<path d="M601 496 L611 496 L601 506 Z" fill="#2f7a3c"/>
<text x="707" y="562" font-family="Liberation Sans" font-size="20.3" font-weight="normal" fill="#000" text-anchor="end" textLength="27.5" lengthAdjust="spacingAndGlyphs" >0,00</text>
<text x="706" y="587.3" font-family="Liberation Sans" font-size="20.5" font-weight="bold" fill="#000" text-anchor="end" textLength="28.5" lengthAdjust="spacingAndGlyphs" >0,00</text>
<rect x="711" y="516" width="108" height="24" fill="#fff" />
<rect x="711" y="542" width="108" height="22" fill="#fff" />
<rect x="711" y="568" width="108" height="22" fill="#f2f2f2" />
<text x="765.0" y="483.6" font-family="Liberation Sans" font-size="20.5" font-weight="bold" fill="#fff" text-anchor="middle" textLength="59.5" lengthAdjust="spacingAndGlyphs" >Bambosz</text>
<text x="765.0" y="507.8" font-family="Liberation Sans" font-size="14.5" font-weight="bold" fill="#fff" text-anchor="middle" textLength="45" lengthAdjust="spacingAndGlyphs" >#DZIEL/0!</text>
<path d="M711 496 L721 496 L711 506 Z" fill="#2f7a3c"/>
<text x="817" y="562" font-family="Liberation Sans" font-size="20.3" font-weight="normal" fill="#000" text-anchor="end" textLength="27.5" lengthAdjust="spacingAndGlyphs" >0,00</text>
<text x="816" y="587.3" font-family="Liberation Sans" font-size="20.5" font-weight="bold" fill="#000" text-anchor="end" textLength="28.5" lengthAdjust="spacingAndGlyphs" >0,00</text>
<rect x="821" y="516" width="108" height="24" fill="#fff" />
<rect x="821" y="542" width="108" height="22" fill="#fff" />
<rect x="821" y="568" width="108" height="22" fill="#f2f2f2" />
<text x="875.0" y="483.6" font-family="Liberation Sans" font-size="20.5" font-weight="bold" fill="#fff" text-anchor="middle" textLength="66" lengthAdjust="spacingAndGlyphs" >Transport</text>
<text x="875.0" y="507.8" font-family="Liberation Sans" font-size="14.5" font-weight="bold" fill="#fff" text-anchor="middle" textLength="45" lengthAdjust="spacingAndGlyphs" >#DZIEL/0!</text>
<path d="M821 496 L831 496 L821 506 Z" fill="#2f7a3c"/>
<text x="927" y="562" font-family="Liberation Sans" font-size="20.3" font-weight="normal" fill="#000" text-anchor="end" textLength="27.5" lengthAdjust="spacingAndGlyphs" >0,00</text>
<text x="926" y="587.3" font-family="Liberation Sans" font-size="20.5" font-weight="bold" fill="#000" text-anchor="end" textLength="28.5" lengthAdjust="spacingAndGlyphs" >0,00</text>
<rect x="931" y="516" width="108" height="24" fill="#fff" />
<rect x="931" y="542" width="108" height="22" fill="#fff" />
<rect x="931" y="568" width="108" height="22" fill="#f2f2f2" />
<text x="985.0" y="483.6" font-family="Liberation Sans" font-size="20.5" font-weight="bold" fill="#fff" text-anchor="middle" textLength="47" lengthAdjust="spacingAndGlyphs" >Opłaty</text>
<text x="985.0" y="507.8" font-family="Liberation Sans" font-size="14.5" font-weight="bold" fill="#fff" text-anchor="middle" textLength="45" lengthAdjust="spacingAndGlyphs" >#DZIEL/0!</text>
<path d="M931 496 L941 496 L931 506 Z" fill="#2f7a3c"/>
<text x="1037" y="536" font-family="Liberation Sans" font-size="20.3" font-weight="normal" fill="#000" text-anchor="end" textLength="27.5" lengthAdjust="spacingAndGlyphs" >0,00</text>
<text x="1037" y="562" font-family="Liberation Sans" font-size="20.3" font-weight="normal" fill="#000" text-anchor="end" textLength="27.5" lengthAdjust="spacingAndGlyphs" >0,00</text>
<text x="1036" y="587.3" font-family="Liberation Sans" font-size="20.5" font-weight="bold" fill="#000" text-anchor="end" textLength="28.5" lengthAdjust="spacingAndGlyphs" >0,00</text>
<rect x="1041" y="516" width="108" height="24" fill="#fff" />
<rect x="1041" y="542" width="108" height="22" fill="#fff" />
<rect x="1041" y="568" width="108" height="22" fill="#f2f2f2" />
<text x="1095.0" y="483.6" font-family="Liberation Sans" font-size="20.5" font-weight="bold" fill="#fff" text-anchor="middle" textLength="95" lengthAdjust="spacingAndGlyphs" >Oszczędności</text>
<text x="1095.0" y="507.8" font-family="Liberation Sans" font-size="14.5" font-weight="bold" fill="#fff" text-anchor="middle" textLength="45" lengthAdjust="spacingAndGlyphs" >#DZIEL/0!</text>
<path d="M1041 496 L1051 496 L1041 506 Z" fill="#2f7a3c"/>
<text x="1147" y="562" font-family="Liberation Sans" font-size="20.3" font-weight="normal" fill="#000" text-anchor="end" textLength="27.5" lengthAdjust="spacingAndGlyphs" >0,00</text>
<text x="1146" y="587.3" font-family="Liberation Sans" font-size="20.5" font-weight="bold" fill="#000" text-anchor="end" textLength="28.5" lengthAdjust="spacingAndGlyphs" >0,00</text>
<rect x="1151" y="516" width="106" height="24" fill="#fff" />
<rect x="1151" y="542" width="106" height="22" fill="#fff" />
<rect x="1151" y="568" width="106" height="22" fill="#f2f2f2" />
<text x="1205.0" y="483.6" font-family="Liberation Sans" font-size="20.5" font-weight="bold" fill="#fff" text-anchor="middle" textLength="29.5" lengthAdjust="spacingAndGlyphs" >Inne</text>
<text x="1205.0" y="507.8" font-family="Liberation Sans" font-size="14.5" font-weight="bold" fill="#fff" text-anchor="middle" textLength="45" lengthAdjust="spacingAndGlyphs" >#DZIEL/0!</text>
<path d="M1151 496 L1161 496 L1151 506 Z" fill="#2f7a3c"/>
<text x="1257" y="536" font-family="Liberation Sans" font-size="20.3" font-weight="normal" fill="#000" text-anchor="end" textLength="27.5" lengthAdjust="spacingAndGlyphs" >0,00</text>
<text x="1257" y="562" font-family="Liberation Sans" font-size="20.3" font-weight="normal" fill="#000" text-anchor="end" textLength="27.5" lengthAdjust="spacingAndGlyphs" >0,00</text>
<text x="1256" y="587.3" font-family="Liberation Sans" font-size="20.5" font-weight="bold" fill="#000" text-anchor="end" textLength="28.5" lengthAdjust="spacingAndGlyphs" >0,00</text>
<rect x="1271" y="456" width="270" height="137" fill="#d9d9d9" />
<rect x="1275" y="460" width="262" height="52" fill="#dd9035" />
<rect x="1275" y="516" width="262" height="73" fill="#fff" />
<text x="1406.5" y="494.3" font-family="Liberation Sans" font-size="20.5" font-weight="bold" fill="#fff" text-anchor="middle" textLength="240" lengthAdjust="spacingAndGlyphs" >Pozostało do zabudżetowania</text>
<text x="1407.7" y="563.5" font-family="Liberation Sans" font-size="37" font-weight="normal" fill="#000" text-anchor="middle" textLength="53.5" lengthAdjust="spacingAndGlyphs" >0,00</text>
<rect x="39" y="610" width="218" height="784" fill="#d9d9d9" />
<rect x="43" y="614" width="210" height="32" fill="#dd9035" />
<rect x="43" y="650" width="210" height="740" fill="#d8d8d8" />
<rect x="43" y="650" width="94" height="22" fill="#f2f2f2" />
<rect x="139" y="650" width="114" height="22" fill="#f2f2f2" />
<text x="89.5" y="667.5" font-family="Liberation Sans" font-size="20.3" font-weight="normal" fill="#000" text-anchor="middle" textLength="10.5" lengthAdjust="spacingAndGlyphs" >1.</text>
<rect x="43" y="674" width="94" height="22" fill="#fff" />
<rect x="139" y="674" width="114" height="22" fill="#fff" />
<text x="89.5" y="691.5" font-family="Liberation Sans" font-size="20.3" font-weight="normal" fill="#000" text-anchor="middle" textLength="10.5" lengthAdjust="spacingAndGlyphs" >2.</text>
<rect x="43" y="698" width="94" height="22" fill="#fff" />
<rect x="139" y="698" width="114" height="22" fill="#fff" />
<text x="89.5" y="715.5" font-family="Liberation Sans" font-size="20.3" font-weight="normal" fill="#000" text-anchor="middle" textLength="10.5" lengthAdjust="spacingAndGlyphs" >3.</text>
<rect x="43" y="722" width="94" height="22" fill="#fff" />
<rect x="139" y="722" width="114" height="22" fill="#fff" />
<text x="89.5" y="739.5" font-family="Liberation Sans" font-size="20.3" font-weight="normal" fill="#000" text-anchor="middle" textLength="10.5" lengthAdjust="spacingAndGlyphs" >4.</text>
<rect x="43" y="746" width="94" height="22" fill="#fff" />
<rect x="139" y="746" width="114" height="22" fill="#fff" />
<text x="89.5" y="763.5" font-family="Liberation Sans" font-size="20.3" font-weight="normal" fill="#000" text-anchor="middle" textLength="10.5" lengthAdjust="spacingAndGlyphs" >5.</text>
<rect x="43" y="770" width="94" height="22" fill="#fff" />
<rect x="139" y="770" width="114" height="22" fill="#fff" />
<text x="89.5" y="787.5" font-family="Liberation Sans" font-size="20.3" font-weight="normal" fill="#000" text-anchor="middle" textLength="10.5" lengthAdjust="spacingAndGlyphs" >6.</text>
<rect x="43" y="794" width="94" height="22" fill="#f2f2f2" />
<rect x="139" y="794" width="114" height="22" fill="#f2f2f2" />
<text x="89.5" y="811.5" font-family="Liberation Sans" font-size="20.3" font-weight="normal" fill="#000" text-anchor="middle" textLength="10.5" lengthAdjust="spacingAndGlyphs" >7.</text>
<rect x="43" y="818" width="94" height="22" fill="#f2f2f2" />
<rect x="139" y="818" width="114" height="22" fill="#f2f2f2" />
<text x="89.5" y="835.5" font-family="Liberation Sans" font-size="20.3" font-weight="normal" fill="#000" text-anchor="middle" textLength="10.5" lengthAdjust="spacingAndGlyphs" >8.</text>
<rect x="43" y="842" width="94" height="22" fill="#fff" />
<rect x="139" y="842" width="114" height="22" fill="#fff" />
<text x="89.5" y="859.5" font-family="Liberation Sans" font-size="20.3" font-weight="normal" fill="#000" text-anchor="middle" textLength="10.5" lengthAdjust="spacingAndGlyphs" >9.</text>
<rect x="43" y="866" width="94" height="22" fill="#fff" />
<rect x="139" y="866" width="114" height="22" fill="#fff" />
<text x="89.5" y="883.5" font-family="Liberation Sans" font-size="20.3" font-weight="normal" fill="#000" text-anchor="middle" textLength="19" lengthAdjust="spacingAndGlyphs" >10.</text>
<rect x="43" y="890" width="94" height="22" fill="#fff" />
<rect x="139" y="890" width="114" height="22" fill="#fff" />
<text x="89.5" y="907.5" font-family="Liberation Sans" font-size="20.3" font-weight="normal" fill="#000" text-anchor="middle" textLength="19" lengthAdjust="spacingAndGlyphs" >11.</text>
<rect x="43" y="914" width="94" height="22" fill="#fff" />
<rect x="139" y="914" width="114" height="22" fill="#fff" />
<text x="89.5" y="931.5" font-family="Liberation Sans" font-size="20.3" font-weight="normal" fill="#000" text-anchor="middle" textLength="19" lengthAdjust="spacingAndGlyphs" >12.</text>
<rect x="43" y="938" width="94" height="22" fill="#fff" />
<rect x="139" y="938" width="114" height="22" fill="#fff" />
<text x="89.5" y="955.5" font-family="Liberation Sans" font-size="20.3" font-weight="normal" fill="#000" text-anchor="middle" textLength="19" lengthAdjust="spacingAndGlyphs" >13.</text>
<rect x="43" y="962" width="94" height="22" fill="#f2f2f2" />
<rect x="139" y="962" width="114" height="22" fill="#f2f2f2" />
<text x="89.5" y="979.5" font-family="Liberation Sans" font-size="20.3" font-weight="normal" fill="#000" text-anchor="middle" textLength="19" lengthAdjust="spacingAndGlyphs" >14.</text>
<rect x="43" y="986" width="94" height="22" fill="#f2f2f2" />
<rect x="139" y="986" width="114" height="22" fill="#f2f2f2" />
<text x="89.5" y="1003.5" font-family="Liberation Sans" font-size="20.3" font-weight="normal" fill="#000" text-anchor="middle" textLength="19" lengthAdjust="spacingAndGlyphs" >15.</text>
<rect x="43" y="1010" width="94" height="22" fill="#fff" />
<rect x="139" y="1010" width="114" height="22" fill="#fff" />
<text x="89.5" y="1027.5" font-family="Liberation Sans" font-size="20.3" font-weight="normal" fill="#000" text-anchor="middle" textLength="19" lengthAdjust="spacingAndGlyphs" >16.</text>
<rect x="43" y="1034" width="94" height="22" fill="#fff" />
<rect x="139" y="1034" width="114" height="22" fill="#fff" />
<text x="89.5" y="1051.5" font-family="Liberation Sans" font-size="20.3" font-weight="normal" fill="#000" text-anchor="middle" textLength="19" lengthAdjust="spacingAndGlyphs" >17.</text>
<rect x="43" y="1058" width="94" height="22" fill="#fff" />
<rect x="139" y="1058" width="114" height="22" fill="#fff" />
<text x="89.5" y="1075.5" font-family="Liberation Sans" font-size="20.3" font-weight="normal" fill="#000" text-anchor="middle" textLength="19" lengthAdjust="spacingAndGlyphs" >18.</text>
<rect x="43" y="1082" width="94" height="22" fill="#fff" />
<rect x="139" y="1082" width="114" height="22" fill="#fff" />
<text x="89.5" y="1099.5" font-family="Liberation Sans" font-size="20.3" font-weight="normal" fill="#000" text-anchor="middle" textLength="19" lengthAdjust="spacingAndGlyphs" >19.</text>
<rect x="43" y="1106" width="94" height="22" fill="#fff" />
<rect x="139" y="1106" width="114" height="22" fill="#fff" />
<text x="89.5" y="1123.5" font-family="Liberation Sans" font-size="20.3" font-weight="normal" fill="#000" text-anchor="middle" textLength="19" lengthAdjust="spacingAndGlyphs" >20.</text>
<rect x="43" y="1130" width="94" height="22" fill="#f2f2f2" />
<rect x="139" y="1130" width="114" height="22" fill="#f2f2f2" />
<text x="89.5" y="1147.5" font-family="Liberation Sans" font-size="20.3" font-weight="normal" fill="#000" text-anchor="middle" textLength="19" lengthAdjust="spacingAndGlyphs" >21.</text>
<rect x="43" y="1154" width="94" height="22" fill="#f2f2f2" />
<rect x="139" y="1154" width="114" height="22" fill="#f2f2f2" />
<text x="89.5" y="1171.5" font-family="Liberation Sans" font-size="20.3" font-weight="normal" fill="#000" text-anchor="middle" textLength="19" lengthAdjust="spacingAndGlyphs" >22.</text>
<rect x="43" y="1178" width="94" height="22" fill="#fff" />
<rect x="139" y="1178" width="114" height="22" fill="#fff" />
<text x="89.5" y="1195.5" font-family="Liberation Sans" font-size="20.3" font-weight="normal" fill="#000" text-anchor="middle" textLength="19" lengthAdjust="spacingAndGlyphs" >23.</text>
<rect x="43" y="1202" width="94" height="22" fill="#fff" />
<rect x="139" y="1202" width="114" height="22" fill="#fff" />
<text x="89.5" y="1219.5" font-family="Liberation Sans" font-size="20.3" font-weight="normal" fill="#000" text-anchor="middle" textLength="19" lengthAdjust="spacingAndGlyphs" >24.</text>
<rect x="43" y="1226" width="94" height="22" fill="#fff" />
<rect x="139" y="1226" width="114" height="22" fill="#fff" />
<text x="89.5" y="1243.5" font-family="Liberation Sans" font-size="20.3" font-weight="normal" fill="#000" text-anchor="middle" textLength="19" lengthAdjust="spacingAndGlyphs" >25.</text>
<rect x="43" y="1250" width="94" height="22" fill="#fff" />
<rect x="139" y="1250" width="114" height="22" fill="#fff" />
<text x="89.5" y="1267.5" font-family="Liberation Sans" font-size="20.3" font-weight="normal" fill="#000" text-anchor="middle" textLength="19" lengthAdjust="spacingAndGlyphs" >26.</text>
<rect x="43" y="1274" width="94" height="22" fill="#fff" />
<rect x="139" y="1274" width="114" height="22" fill="#fff" />
<text x="89.5" y="1291.5" font-family="Liberation Sans" font-size="20.3" font-weight="normal" fill="#000" text-anchor="middle" textLength="19" lengthAdjust="spacingAndGlyphs" >27.</text>
<rect x="43" y="1298" width="94" height="22" fill="#f2f2f2" />
<rect x="139" y="1298" width="114" height="22" fill="#f2f2f2" />
<text x="89.5" y="1315.5" font-family="Liberation Sans" font-size="20.3" font-weight="normal" fill="#000" text-anchor="middle" textLength="19" lengthAdjust="spacingAndGlyphs" >28.</text>
<rect x="43" y="1322" width="94" height="22" fill="#f2f2f2" />
<rect x="139" y="1322" width="114" height="22" fill="#f2f2f2" />
<text x="89.5" y="1339.5" font-family="Liberation Sans" font-size="20.3" font-weight="normal" fill="#000" text-anchor="middle" textLength="19" lengthAdjust="spacingAndGlyphs" >29.</text>
<rect x="43" y="1346" width="94" height="22" fill="#fff" />
<rect x="139" y="1346" width="114" height="22" fill="#fff" />
<text x="89.5" y="1363.5" font-family="Liberation Sans" font-size="20.3" font-weight="normal" fill="#000" text-anchor="middle" textLength="19" lengthAdjust="spacingAndGlyphs" >30.</text>
<rect x="43" y="1370" width="94" height="20" fill="#fff" />
<rect x="139" y="1370" width="114" height="20" fill="#fff" />
<text x="89.5" y="1387.5" font-family="Liberation Sans" font-size="20.3" font-weight="normal" fill="#000" text-anchor="middle" textLength="19" lengthAdjust="spacingAndGlyphs" >31.</text>
<text x="90" y="637" font-family="Liberation Sans" font-size="20.5" font-weight="bold" fill="#fff" text-anchor="middle" textLength="39" lengthAdjust="spacingAndGlyphs" >Dzień</text>
<text x="197.7" y="637" font-family="Liberation Sans" font-size="20.5" font-weight="bold" fill="#fff" text-anchor="middle" textLength="50.2" lengthAdjust="spacingAndGlyphs" >Zarobki</text>
<rect x="267" y="610" width="994" height="784" fill="#d9d9d9" />
<rect x="271" y="614" width="986" height="32" fill="#dd9035" />
<rect x="271" y="650" width="986" height="740" fill="#d8d8d8" />
<rect x="271" y="650" width="108" height="22" fill="#f2f2f2" />
<rect x="271" y="674" width="108" height="22" fill="#fff" />
<rect x="271" y="698" width="108" height="22" fill="#fff" />
<rect x="271" y="722" width="108" height="22" fill="#fff" />
<rect x="271" y="746" width="108" height="22" fill="#fff" />
<rect x="271" y="770" width="108" height="22" fill="#fff" />
<rect x="271" y="794" width="108" height="22" fill="#f2f2f2" />
<rect x="271" y="818" width="108" height="22" fill="#f2f2f2" />
<rect x="271" y="842" width="108" height="22" fill="#fff" />
<rect x="271" y="866" width="108" height="22" fill="#fff" />
<rect x="271" y="890" width="108" height="22" fill="#fff" />
<rect x="271" y="914" width="108" height="22" fill="#fff" />
<rect x="271" y="938" width="108" height="22" fill="#fff" />
<rect x="271" y="962" width="108" height="22" fill="#f2f2f2" />
<rect x="271" y="986" width="108" height="22" fill="#f2f2f2" />
<rect x="271" y="1010" width="108" height="22" fill="#fff" />
<rect x="271" y="1034" width="108" height="22" fill="#fff" />
<rect x="271" y="1058" width="108" height="22" fill="#fff" />
<rect x="271" y="1082" width="108" height="22" fill="#fff" />
<rect x="271" y="1106" width="108" height="22" fill="#fff" />
<rect x="271" y="1130" width="108" height="22" fill="#f2f2f2" />
<rect x="271" y="1154" width="108" height="22" fill="#f2f2f2" />
<rect x="271" y="1178" width="108" height="22" fill="#fff" />
<rect x="271" y="1202" width="108" height="22" fill="#fff" />
<rect x="271" y="1226" width="108" height="22" fill="#fff" />
<rect x="271" y="1250" width="108" height="22" fill="#fff" />
<rect x="271" y="1274" width="108" height="22" fill="#fff" />
<rect x="271" y="1298" width="108" height="22" fill="#f2f2f2" />
<rect x="271" y="1322" width="108" height="22" fill="#f2f2f2" />
<rect x="271" y="1346" width="108" height="22" fill="#fff" />
<rect x="271" y="1370" width="108" height="20" fill="#fff" />
<text x="325.0" y="637" font-family="Liberation Sans" font-size="20.5" font-weight="bold" fill="#fff" text-anchor="middle" textLength="60" lengthAdjust="spacingAndGlyphs" >Jedzenie</text>
<rect x="381" y="650" width="108" height="22" fill="#f2f2f2" />
<rect x="381" y="674" width="108" height="22" fill="#fff" />
<rect x="381" y="698" width="108" height="22" fill="#fff" />
<rect x="381" y="722" width="108" height="22" fill="#fff" />
<rect x="381" y="746" width="108" height="22" fill="#fff" />
<rect x="381" y="770" width="108" height="22" fill="#fff" />
<rect x="381" y="794" width="108" height="22" fill="#f2f2f2" />
<rect x="381" y="818" width="108" height="22" fill="#f2f2f2" />
<rect x="381" y="842" width="108" height="22" fill="#fff" />
<rect x="381" y="866" width="108" height="22" fill="#fff" />
<rect x="381" y="890" width="108" height="22" fill="#fff" />
<rect x="381" y="914" width="108" height="22" fill="#fff" />
<rect x="381" y="938" width="108" height="22" fill="#fff" />
<rect x="381" y="962" width="108" height="22" fill="#f2f2f2" />
<rect x="381" y="986" width="108" height="22" fill="#f2f2f2" />
<rect x="381" y="1010" width="108" height="22" fill="#fff" />
<rect x="381" y="1034" width="108" height="22" fill="#fff" />
<rect x="381" y="1058" width="108" height="22" fill="#fff" />
<rect x="381" y="1082" width="108" height="22" fill="#fff" />
<rect x="381" y="1106" width="108" height="22" fill="#fff" />
<rect x="381" y="1130" width="108" height="22" fill="#f2f2f2" />
<rect x="381" y="1154" width="108" height="22" fill="#f2f2f2" />
<rect x="381" y="1178" width="108" height="22" fill="#fff" />
<rect x="381" y="1202" width="108" height="22" fill="#fff" />
<rect x="381" y="1226" width="108" height="22" fill="#fff" />
<rect x="381" y="1250" width="108" height="22" fill="#fff" />
<rect x="381" y="1274" width="108" height="22" fill="#fff" />
<rect x="381" y="1298" width="108" height="22" fill="#f2f2f2" />
<rect x="381" y="1322" width="108" height="22" fill="#f2f2f2" />
<rect x="381" y="1346" width="108" height="22" fill="#fff" />
<rect x="381" y="1370" width="108" height="20" fill="#fff" />
<text x="435.0" y="637" font-family="Liberation Sans" font-size="20.5" font-weight="bold" fill="#fff" text-anchor="middle" textLength="82.5" lengthAdjust="spacingAndGlyphs" >Restauracje</text>
<rect x="491" y="650" width="108" height="22" fill="#f2f2f2" />
<rect x="491" y="674" width="108" height="22" fill="#fff" />
<rect x="491" y="698" width="108" height="22" fill="#fff" />
<rect x="491" y="722" width="108" height="22" fill="#fff" />
<rect x="491" y="746" width="108" height="22" fill="#fff" />
<rect x="491" y="770" width="108" height="22" fill="#fff" />
<rect x="491" y="794" width="108" height="22" fill="#f2f2f2" />
<rect x="491" y="818" width="108" height="22" fill="#f2f2f2" />
<rect x="491" y="842" width="108" height="22" fill="#fff" />
<rect x="491" y="866" width="108" height="22" fill="#fff" />
<rect x="491" y="890" width="108" height="22" fill="#fff" />
<rect x="491" y="914" width="108" height="22" fill="#fff" />
<rect x="491" y="938" width="108" height="22" fill="#fff" />
<rect x="491" y="962" width="108" height="22" fill="#f2f2f2" />
<rect x="491" y="986" width="108" height="22" fill="#f2f2f2" />
<rect x="491" y="1010" width="108" height="22" fill="#fff" />
<rect x="491" y="1034" width="108" height="22" fill="#fff" />
<rect x="491" y="1058" width="108" height="22" fill="#fff" />
<rect x="491" y="1082" width="108" height="22" fill="#fff" />
<rect x="491" y="1106" width="108" height="22" fill="#fff" />
<rect x="491" y="1130" width="108" height="22" fill="#f2f2f2" />
<rect x="491" y="1154" width="108" height="22" fill="#f2f2f2" />
<rect x="491" y="1178" width="108" height="22" fill="#fff" />
<rect x="491" y="1202" width="108" height="22" fill="#fff" />
<rect x="491" y="1226" width="108" height="22" fill="#fff" />
<rect x="491" y="1250" width="108" height="22" fill="#fff" />
<rect x="491" y="1274" width="108" height="22" fill="#fff" />
<rect x="491" y="1298" width="108" height="22" fill="#f2f2f2" />
<rect x="491" y="1322" width="108" height="22" fill="#f2f2f2" />
<rect x="491" y="1346" width="108" height="22" fill="#fff" />
<rect x="491" y="1370" width="108" height="20" fill="#fff" />
<text x="545.0" y="637" font-family="Liberation Sans" font-size="20.5" font-weight="bold" fill="#fff" text-anchor="middle" textLength="32" lengthAdjust="spacingAndGlyphs" >Dom</text>
<rect x="601" y="650" width="108" height="22" fill="#f2f2f2" />
<rect x="601" y="674" width="108" height="22" fill="#fff" />
<rect x="601" y="698" width="108" height="22" fill="#fff" />
<rect x="601" y="722" width="108" height="22" fill="#fff" />
<rect x="601" y="746" width="108" height="22" fill="#fff" />
<rect x="601" y="770" width="108" height="22" fill="#fff" />
<rect x="601" y="794" width="108" height="22" fill="#f2f2f2" />
<rect x="601" y="818" width="108" height="22" fill="#f2f2f2" />
<rect x="601" y="842" width="108" height="22" fill="#fff" />
<rect x="601" y="866" width="108" height="22" fill="#fff" />
<rect x="601" y="890" width="108" height="22" fill="#fff" />
<rect x="601" y="914" width="108" height="22" fill="#fff" />
<rect x="601" y="938" width="108" height="22" fill="#fff" />
<rect x="601" y="962" width="108" height="22" fill="#f2f2f2" />
<rect x="601" y="986" width="108" height="22" fill="#f2f2f2" />
<rect x="601" y="1010" width="108" height="22" fill="#fff" />
<rect x="601" y="1034" width="108" height="22" fill="#fff" />
<rect x="601" y="1058" width="108" height="22" fill="#fff" />
<rect x="601" y="1082" width="108" height="22" fill="#fff" />
<rect x="601" y="1106" width="108" height="22" fill="#fff" />
<rect x="601" y="1130" width="108" height="22" fill="#f2f2f2" />
<rect x="601" y="1154" width="108" height="22" fill="#f2f2f2" />
<rect x="601" y="1178" width="108" height="22" fill="#fff" />
<rect x="601" y="1202" width="108" height="22" fill="#fff" />
<rect x="601" y="1226" width="108" height="22" fill="#fff" />
<rect x="601" y="1250" width="108" height="22" fill="#fff" />
<rect x="601" y="1274" width="108" height="22" fill="#fff" />
<rect x="601" y="1298" width="108" height="22" fill="#f2f2f2" />
<rect x="601" y="1322" width="108" height="22" fill="#f2f2f2" />
<rect x="601" y="1346" width="108" height="22" fill="#fff" />
<rect x="601" y="1370" width="108" height="20" fill="#fff" />
<text x="655.0" y="637" font-family="Liberation Sans" font-size="20.5" font-weight="bold" fill="#fff" text-anchor="middle" textLength="70" lengthAdjust="spacingAndGlyphs" >Kosmetyki</text>
<rect x="711" y="650" width="108" height="22" fill="#f2f2f2" />
<rect x="711" y="674" width="108" height="22" fill="#fff" />
<rect x="711" y="698" width="108" height="22" fill="#fff" />
<rect x="711" y="722" width="108" height="22" fill="#fff" />
<rect x="711" y="746" width="108" height="22" fill="#fff" />
<rect x="711" y="770" width="108" height="22" fill="#fff" />
<rect x="711" y="794" width="108" height="22" fill="#f2f2f2" />
<rect x="711" y="818" width="108" height="22" fill="#f2f2f2" />
<rect x="711" y="842" width="108" height="22" fill="#fff" />
<rect x="711" y="866" width="108" height="22" fill="#fff" />
<rect x="711" y="890" width="108" height="22" fill="#fff" />
<rect x="711" y="914" width="108" height="22" fill="#fff" />
<rect x="711" y="938" width="108" height="22" fill="#fff" />
<rect x="711" y="962" width="108" height="22" fill="#f2f2f2" />
<rect x="711" y="986" width="108" height="22" fill="#f2f2f2" />
<rect x="711" y="1010" width="108" height="22" fill="#fff" />
<rect x="711" y="1034" width="108" height="22" fill="#fff" />
<rect x="711" y="1058" width="108" height="22" fill="#fff" />
<rect x="711" y="1082" width="108" height="22" fill="#fff" />
<rect x="711" y="1106" width="108" height="22" fill="#fff" />
<rect x="711" y="1130" width="108" height="22" fill="#f2f2f2" />
<rect x="711" y="1154" width="108" height="22" fill="#f2f2f2" />
<rect x="711" y="1178" width="108" height="22" fill="#fff" />
<rect x="711" y="1202" width="108" height="22" fill="#fff" />
<rect x="711" y="1226" width="108" height="22" fill="#fff" />
<rect x="711" y="1250" width="108" height="22" fill="#fff" />
<rect x="711" y="1274" width="108" height="22" fill="#fff" />
<rect x="711" y="1298" width="108" height="22" fill="#f2f2f2" />
<rect x="711" y="1322" width="108" height="22" fill="#f2f2f2" />
<rect x="711" y="1346" width="108" height="22" fill="#fff" />
<rect x="711" y="1370" width="108" height="20" fill="#fff" />
<text x="765.0" y="637" font-family="Liberation Sans" font-size="20.5" font-weight="bold" fill="#fff" text-anchor="middle" textLength="59.5" lengthAdjust="spacingAndGlyphs" >Bambosz</text>
<rect x="821" y="650" width="108" height="22" fill="#f2f2f2" />
<rect x="821" y="674" width="108" height="22" fill="#fff" />
<rect x="821" y="698" width="108" height="22" fill="#fff" />
<rect x="821" y="722" width="108" height="22" fill="#fff" />
<rect x="821" y="746" width="108" height="22" fill="#fff" />
<rect x="821" y="770" width="108" height="22" fill="#fff" />
<rect x="821" y="794" width="108" height="22" fill="#f2f2f2" />
<rect x="821" y="818" width="108" height="22" fill="#f2f2f2" />
<rect x="821" y="842" width="108" height="22" fill="#fff" />
<rect x="821" y="866" width="108" height="22" fill="#fff" />
<rect x="821" y="890" width="108" height="22" fill="#fff" />
<rect x="821" y="914" width="108" height="22" fill="#fff" />
<rect x="821" y="938" width="108" height="22" fill="#fff" />
<rect x="821" y="962" width="108" height="22" fill="#f2f2f2" />
<rect x="821" y="986" width="108" height="22" fill="#f2f2f2" />
<rect x="821" y="1010" width="108" height="22" fill="#fff" />
<rect x="821" y="1034" width="108" height="22" fill="#fff" />
<rect x="821" y="1058" width="108" height="22" fill="#fff" />
<rect x="821" y="1082" width="108" height="22" fill="#fff" />
<rect x="821" y="1106" width="108" height="22" fill="#fff" />
<rect x="821" y="1130" width="108" height="22" fill="#f2f2f2" />
<rect x="821" y="1154" width="108" height="22" fill="#f2f2f2" />
<rect x="821" y="1178" width="108" height="22" fill="#fff" />
<rect x="821" y="1202" width="108" height="22" fill="#fff" />
<rect x="821" y="1226" width="108" height="22" fill="#fff" />
<rect x="821" y="1250" width="108" height="22" fill="#fff" />
<rect x="821" y="1274" width="108" height="22" fill="#fff" />
<rect x="821" y="1298" width="108" height="22" fill="#f2f2f2" />
<rect x="821" y="1322" width="108" height="22" fill="#f2f2f2" />
<rect x="821" y="1346" width="108" height="22" fill="#fff" />
<rect x="821" y="1370" width="108" height="20" fill="#fff" />
<text x="875.0" y="637" font-family="Liberation Sans" font-size="20.5" font-weight="bold" fill="#fff" text-anchor="middle" textLength="66" lengthAdjust="spacingAndGlyphs" >Transport</text>
<rect x="931" y="650" width="108" height="22" fill="#f2f2f2" />
<rect x="931" y="674" width="108" height="22" fill="#fff" />
<rect x="931" y="698" width="108" height="22" fill="#fff" />
<rect x="931" y="722" width="108" height="22" fill="#fff" />
<rect x="931" y="746" width="108" height="22" fill="#fff" />
<rect x="931" y="770" width="108" height="22" fill="#fff" />
<rect x="931" y="794" width="108" height="22" fill="#f2f2f2" />
<rect x="931" y="818" width="108" height="22" fill="#f2f2f2" />
<rect x="931" y="842" width="108" height="22" fill="#fff" />
<rect x="931" y="866" width="108" height="22" fill="#fff" />
<rect x="931" y="890" width="108" height="22" fill="#fff" />
<rect x="931" y="914" width="108" height="22" fill="#fff" />
<rect x="931" y="938" width="108" height="22" fill="#fff" />
<rect x="931" y="962" width="108" height="22" fill="#f2f2f2" />
<rect x="931" y="986" width="108" height="22" fill="#f2f2f2" />
<rect x="931" y="1010" width="108" height="22" fill="#fff" />
<rect x="931" y="1034" width="108" height="22" fill="#fff" />
<rect x="931" y="1058" width="108" height="22" fill="#fff" />
<rect x="931" y="1082" width="108" height="22" fill="#fff" />
<rect x="931" y="1106" width="108" height="22" fill="#fff" />
<rect x="931" y="1130" width="108" height="22" fill="#f2f2f2" />
<rect x="931" y="1154" width="108" height="22" fill="#f2f2f2" />
<rect x="931" y="1178" width="108" height="22" fill="#fff" />
<rect x="931" y="1202" width="108" height="22" fill="#fff" />
<rect x="931" y="1226" width="108" height="22" fill="#fff" />
<rect x="931" y="1250" width="108" height="22" fill="#fff" />
<rect x="931" y="1274" width="108" height="22" fill="#fff" />
<rect x="931" y="1298" width="108" height="22" fill="#f2f2f2" />
<rect x="931" y="1322" width="108" height="22" fill="#f2f2f2" />
<rect x="931" y="1346" width="108" height="22" fill="#fff" />
<rect x="931" y="1370" width="108" height="20" fill="#fff" />
<text x="985.0" y="637" font-family="Liberation Sans" font-size="20.5" font-weight="bold" fill="#fff" text-anchor="middle" textLength="47" lengthAdjust="spacingAndGlyphs" >Opłaty</text>
<rect x="1041" y="650" width="108" height="22" fill="#f2f2f2" />
<rect x="1041" y="674" width="108" height="22" fill="#fff" />
<rect x="1041" y="698" width="108" height="22" fill="#fff" />
<rect x="1041" y="722" width="108" height="22" fill="#fff" />
<rect x="1041" y="746" width="108" height="22" fill="#fff" />
<rect x="1041" y="770" width="108" height="22" fill="#fff" />
<rect x="1041" y="794" width="108" height="22" fill="#f2f2f2" />
<rect x="1041" y="818" width="108" height="22" fill="#f2f2f2" />
<rect x="1041" y="842" width="108" height="22" fill="#fff" />
<rect x="1041" y="866" width="108" height="22" fill="#fff" />
<rect x="1041" y="890" width="108" height="22" fill="#fff" />
<rect x="1041" y="914" width="108" height="22" fill="#fff" />
<rect x="1041" y="938" width="108" height="22" fill="#fff" />
<rect x="1041" y="962" width="108" height="22" fill="#f2f2f2" />
<rect x="1041" y="986" width="108" height="22" fill="#f2f2f2" />
<rect x="1041" y="1010" width="108" height="22" fill="#fff" />
<rect x="1041" y="1034" width="108" height="22" fill="#fff" />
<rect x="1041" y="1058" width="108" height="22" fill="#fff" />
<rect x="1041" y="1082" width="108" height="22" fill="#fff" />
<rect x="1041" y="1106" width="108" height="22" fill="#fff" />
<rect x="1041" y="1130" width="108" height="22" fill="#f2f2f2" />
<rect x="1041" y="1154" width="108" height="22" fill="#f2f2f2" />
<rect x="1041" y="1178" width="108" height="22" fill="#fff" />
<rect x="1041" y="1202" width="108" height="22" fill="#fff" />
<rect x="1041" y="1226" width="108" height="22" fill="#fff" />
<rect x="1041" y="1250" width="108" height="22" fill="#fff" />
<rect x="1041" y="1274" width="108" height="22" fill="#fff" />
<rect x="1041" y="1298" width="108" height="22" fill="#f2f2f2" />
<rect x="1041" y="1322" width="108" height="22" fill="#f2f2f2" />
<rect x="1041" y="1346" width="108" height="22" fill="#fff" />
<rect x="1041" y="1370" width="108" height="20" fill="#fff" />
<text x="1095.0" y="637" font-family="Liberation Sans" font-size="20.5" font-weight="bold" fill="#fff" text-anchor="middle" textLength="95" lengthAdjust="spacingAndGlyphs" >Oszczędności</text>
<rect x="1151" y="650" width="106" height="22" fill="#f2f2f2" />
<rect x="1151" y="674" width="106" height="22" fill="#fff" />
<rect x="1151" y="698" width="106" height="22" fill="#fff" />
<rect x="1151" y="722" width="106" height="22" fill="#fff" />
<rect x="1151" y="746" width="106" height="22" fill="#fff" />
<rect x="1151" y="770" width="106" height="22" fill="#fff" />
<rect x="1151" y="794" width="106" height="22" fill="#f2f2f2" />
<rect x="1151" y="818" width="106" height="22" fill="#f2f2f2" />
<rect x="1151" y="842" width="106" height="22" fill="#fff" />
<rect x="1151" y="866" width="106" height="22" fill="#fff" />
<rect x="1151" y="890" width="106" height="22" fill="#fff" />
<rect x="1151" y="914" width="106" height="22" fill="#fff" />
<rect x="1151" y="938" width="106" height="22" fill="#fff" />
<rect x="1151" y="962" width="106" height="22" fill="#f2f2f2" />
<rect x="1151" y="986" width="106" height="22" fill="#f2f2f2" />
<rect x="1151" y="1010" width="106" height="22" fill="#fff" />
<rect x="1151" y="1034" width="106" height="22" fill="#fff" />
<rect x="1151" y="1058" width="106" height="22" fill="#fff" />
<rect x="1151" y="1082" width="106" height="22" fill="#fff" />
<rect x="1151" y="1106" width="106" height="22" fill="#fff" />
<rect x="1151" y="1130" width="106" height="22" fill="#f2f2f2" />
<rect x="1151" y="1154" width="106" height="22" fill="#f2f2f2" />
<rect x="1151" y="1178" width="106" height="22" fill="#fff" />
<rect x="1151" y="1202" width="106" height="22" fill="#fff" />
<rect x="1151" y="1226" width="106" height="22" fill="#fff" />
<rect x="1151" y="1250" width="106" height="22" fill="#fff" />
<rect x="1151" y="1274" width="106" height="22" fill="#fff" />
<rect x="1151" y="1298" width="106" height="22" fill="#f2f2f2" />
<rect x="1151" y="1322" width="106" height="22" fill="#f2f2f2" />
<rect x="1151" y="1346" width="106" height="22" fill="#fff" />
<rect x="1151" y="1370" width="106" height="20" fill="#fff" />
<text x="1205.0" y="637" font-family="Liberation Sans" font-size="20.5" font-weight="bold" fill="#fff" text-anchor="middle" textLength="29.5" lengthAdjust="spacingAndGlyphs" >Inne</text>
<rect x="1271" y="610" width="270" height="208" fill="#d9d9d9" />
<rect x="1275" y="614" width="262" height="32" fill="#dd9035" />
<rect x="1275" y="650" width="262" height="164" fill="#d8d8d8" />
<text x="1407.6" y="637.2" font-family="Liberation Sans" font-size="22" font-weight="bold" fill="#fff" text-anchor="middle" textLength="97" lengthAdjust="spacingAndGlyphs" >Październik</text>
<rect x="1275" y="650" width="36" height="22" fill="#f2f2f2" />
<rect x="1275" y="674" width="36" height="22" fill="#fff" />
<rect x="1275" y="698" width="36" height="22" fill="#fff" />
<rect x="1275" y="722" width="36" height="22" fill="#fff" />
<rect x="1275" y="746" width="36" height="22" fill="#fff" />
<rect x="1275" y="770" width="36" height="22" fill="#fff" />
<rect x="1275" y="794" width="36" height="20" fill="#fff" />
<text x="1293.5" y="668.2" font-family="Liberation Sans" font-size="20.3" font-weight="normal" fill="#000" text-anchor="middle" textLength="8.5" lengthAdjust="spacingAndGlyphs" >P</text>
<text x="1293.5" y="716" font-family="Liberation Sans" font-size="20.3" font-weight="normal" fill="#000" text-anchor="middle" textLength="8.5" lengthAdjust="spacingAndGlyphs" >2</text>
<text x="1293.5" y="740" font-family="Liberation Sans" font-size="20.3" font-weight="normal" fill="#000" text-anchor="middle" textLength="8.5" lengthAdjust="spacingAndGlyphs" >9</text>
<text x="1293.5" y="764" font-family="Liberation Sans" font-size="20.3" font-weight="normal" fill="#000" text-anchor="middle" textLength="14.5" lengthAdjust="spacingAndGlyphs" >16</text>
<text x="1293.5" y="788" font-family="Liberation Sans" font-size="20.3" font-weight="normal" fill="#000" text-anchor="middle" textLength="14.5" lengthAdjust="spacingAndGlyphs" >23</text>
<text x="1293.5" y="812" font-family="Liberation Sans" font-size="20.3" font-weight="normal" fill="#000" text-anchor="middle" textLength="14.5" lengthAdjust="spacingAndGlyphs" >30</text>
<rect x="1313" y="650" width="36" height="22" fill="#f2f2f2" />
<rect x="1313" y="674" width="36" height="22" fill="#fff" />
<rect x="1313" y="698" width="36" height="22" fill="#fff" />
<rect x="1313" y="722" width="36" height="22" fill="#fff" />
<rect x="1313" y="746" width="36" height="22" fill="#fff" />
<rect x="1313" y="770" width="36" height="22" fill="#fff" />
<rect x="1313" y="794" width="36" height="20" fill="#fff" />
<text x="1331.5" y="668.2" font-family="Liberation Sans" font-size="20.3" font-weight="normal" fill="#000" text-anchor="middle" textLength="11" lengthAdjust="spacingAndGlyphs" >W</text>
<text x="1331.5" y="716" font-family="Liberation Sans" font-size="20.3" font-weight="normal" fill="#000" text-anchor="middle" textLength="8.5" lengthAdjust="spacingAndGlyphs" >3</text>
<text x="1331.5" y="740" font-family="Liberation Sans" font-size="20.3" font-weight="normal" fill="#000" text-anchor="middle" textLength="14.5" lengthAdjust="spacingAndGlyphs" >10</text>
<text x="1331.5" y="764" font-family="Liberation Sans" font-size="20.3" font-weight="normal" fill="#000" text-anchor="middle" textLength="14.5" lengthAdjust="spacingAndGlyphs" >17</text>
<text x="1331.5" y="788" font-family="Liberation Sans" font-size="20.3" font-weight="normal" fill="#000" text-anchor="middle" textLength="14.5" lengthAdjust="spacingAndGlyphs" >24</text>
<text x="1331.5" y="812" font-family="Liberation Sans" font-size="20.3" font-weight="normal" fill="#000" text-anchor="middle" textLength="14.5" lengthAdjust="spacingAndGlyphs" >31</text>
<rect x="1351" y="650" width="36" height="22" fill="#f2f2f2" />
<rect x="1351" y="674" width="36" height="22" fill="#fff" />
<rect x="1351" y="698" width="36" height="22" fill="#fff" />
<rect x="1351" y="722" width="36" height="22" fill="#fff" />
<rect x="1351" y="746" width="36" height="22" fill="#fff" />
<rect x="1351" y="770" width="36" height="22" fill="#fff" />
<rect x="1351" y="794" width="36" height="20" fill="#fff" />
<text x="1369.5" y="668.2" font-family="Liberation Sans" font-size="20.3" font-weight="normal" fill="#000" text-anchor="middle" textLength="8.5" lengthAdjust="spacingAndGlyphs" >Ś</text>
<text x="1369.5" y="716" font-family="Liberation Sans" font-size="20.3" font-weight="normal" fill="#000" text-anchor="middle" textLength="8.5" lengthAdjust="spacingAndGlyphs" >4</text>
<text x="1369.5" y="740" font-family="Liberation Sans" font-size="20.3" font-weight="normal" fill="#000" text-anchor="middle" textLength="14.5" lengthAdjust="spacingAndGlyphs" >11</text>
<text x="1369.5" y="764" font-family="Liberation Sans" font-size="20.3" font-weight="normal" fill="#000" text-anchor="middle" textLength="14.5" lengthAdjust="spacingAndGlyphs" >18</text>
<text x="1369.5" y="788" font-family="Liberation Sans" font-size="20.3" font-weight="normal" fill="#000" text-anchor="middle" textLength="14.5" lengthAdjust="spacingAndGlyphs" >25</text>
<rect x="1389" y="650" width="36" height="22" fill="#f2f2f2" />
<rect x="1389" y="674" width="36" height="22" fill="#fff" />
<rect x="1389" y="698" width="36" height="22" fill="#fff" />
<rect x="1389" y="722" width="36" height="22" fill="#fff" />
<rect x="1389" y="746" width="36" height="22" fill="#fff" />
<rect x="1389" y="770" width="36" height="22" fill="#fff" />
<rect x="1389" y="794" width="36" height="20" fill="#fff" />
<text x="1407.5" y="668.2" font-family="Liberation Sans" font-size="20.3" font-weight="normal" fill="#000" text-anchor="middle" textLength="8.5" lengthAdjust="spacingAndGlyphs" >C</text>
<text x="1407.5" y="716" font-family="Liberation Sans" font-size="20.3" font-weight="normal" fill="#000" text-anchor="middle" textLength="8.5" lengthAdjust="spacingAndGlyphs" >5</text>
<text x="1407.5" y="740" font-family="Liberation Sans" font-size="20.3" font-weight="normal" fill="#000" text-anchor="middle" textLength="14.5" lengthAdjust="spacingAndGlyphs" >12</text>
<text x="1407.5" y="764" font-family="Liberation Sans" font-size="20.3" font-weight="normal" fill="#000" text-anchor="middle" textLength="14.5" lengthAdjust="spacingAndGlyphs" >19</text>
<text x="1407.5" y="788" font-family="Liberation Sans" font-size="20.3" font-weight="normal" fill="#000" text-anchor="middle" textLength="14.5" lengthAdjust="spacingAndGlyphs" >26</text>
<rect x="1427" y="650" width="36" height="22" fill="#f2f2f2" />
<rect x="1427" y="674" width="36" height="22" fill="#fff" />
<rect x="1427" y="698" width="36" height="22" fill="#fff" />
<rect x="1427" y="722" width="36" height="22" fill="#fff" />
<rect x="1427" y="746" width="36" height="22" fill="#fff" />
<rect x="1427" y="770" width="36" height="22" fill="#fff" />
<rect x="1427" y="794" width="36" height="20" fill="#fff" />
<text x="1445.5" y="668.2" font-family="Liberation Sans" font-size="20.3" font-weight="normal" fill="#000" text-anchor="middle" textLength="8.5" lengthAdjust="spacingAndGlyphs" >P</text>
<text x="1445.5" y="716" font-family="Liberation Sans" font-size="20.3" font-weight="normal" fill="#000" text-anchor="middle" textLength="8.5" lengthAdjust="spacingAndGlyphs" >6</text>
<text x="1445.5" y="740" font-family="Liberation Sans" font-size="20.3" font-weight="normal" fill="#000" text-anchor="middle" textLength="14.5" lengthAdjust="spacingAndGlyphs" >13</text>
<text x="1445.5" y="764" font-family="Liberation Sans" font-size="20.3" font-weight="normal" fill="#000" text-anchor="middle" textLength="14.5" lengthAdjust="spacingAndGlyphs" >20</text>
<text x="1445.5" y="788" font-family="Liberation Sans" font-size="20.3" font-weight="normal" fill="#000" text-anchor="middle" textLength="14.5" lengthAdjust="spacingAndGlyphs" >27</text>
<rect x="1465" y="650" width="36" height="22" fill="#f2f2f2" />
<rect x="1465" y="674" width="36" height="22" fill="#fff" />
<rect x="1465" y="698" width="36" height="22" fill="#fff" />
<rect x="1465" y="722" width="36" height="22" fill="#fff" />
<rect x="1465" y="746" width="36" height="22" fill="#fff" />
<rect x="1465" y="770" width="36" height="22" fill="#fff" />
<rect x="1465" y="794" width="36" height="20" fill="#fff" />
<text x="1483.5" y="668.2" font-family="Liberation Sans" font-size="20.3" font-weight="normal" fill="#000" text-anchor="middle" textLength="8.5" lengthAdjust="spacingAndGlyphs" >S</text>
<text x="1483.5" y="716" font-family="Liberation Sans" font-size="20.3" font-weight="normal" fill="#000" text-anchor="middle" textLength="8.5" lengthAdjust="spacingAndGlyphs" >7</text>
<text x="1483.5" y="740" font-family="Liberation Sans" font-size="20.3" font-weight="normal" fill="#000" text-anchor="middle" textLength="14.5" lengthAdjust="spacingAndGlyphs" >14</text>
<text x="1483.5" y="764" font-family="Liberation Sans" font-size="20.3" font-weight="normal" fill="#000" text-anchor="middle" textLength="14.5" lengthAdjust="spacingAndGlyphs" >21</text>
<text x="1483.5" y="788" font-family="Liberation Sans" font-size="20.3" font-weight="normal" fill="#000" text-anchor="middle" textLength="14.5" lengthAdjust="spacingAndGlyphs" >28</text>
<rect x="1503" y="650" width="34" height="22" fill="#f2f2f2" />
<rect x="1503" y="674" width="34" height="22" fill="#fff" />
<rect x="1503" y="698" width="34" height="22" fill="#fff" />
<rect x="1503" y="722" width="34" height="22" fill="#fff" />
<rect x="1503" y="746" width="34" height="22" fill="#fff" />
<rect x="1503" y="770" width="34" height="22" fill="#fff" />
<rect x="1503" y="794" width="34" height="20" fill="#fff" />
<text x="1521.0" y="668.2" font-family="Liberation Sans" font-size="20.3" font-weight="normal" fill="#000" text-anchor="middle" textLength="9" lengthAdjust="spacingAndGlyphs" >N</text>
<text x="1521.0" y="692" font-family="Liberation Sans" font-size="20.3" font-weight="normal" fill="#000" text-anchor="middle" textLength="6.5" lengthAdjust="spacingAndGlyphs" >1</text>
<text x="1521.0" y="716" font-family="Liberation Sans" font-size="20.3" font-weight="normal" fill="#000" text-anchor="middle" textLength="8.5" lengthAdjust="spacingAndGlyphs" >8</text>
<text x="1521.0" y="740" font-family="Liberation Sans" font-size="20.3" font-weight="normal" fill="#000" text-anchor="middle" textLength="14.5" lengthAdjust="spacingAndGlyphs" >15</text>
<text x="1521.0" y="764" font-family="Liberation Sans" font-size="20.3" font-weight="normal" fill="#000" text-anchor="middle" textLength="14.5" lengthAdjust="spacingAndGlyphs" >22</text>
<text x="1521.0" y="788" font-family="Liberation Sans" font-size="20.3" font-weight="normal" fill="#000" text-anchor="middle" textLength="14.5" lengthAdjust="spacingAndGlyphs" >29</text>
<rect x="1271" y="838" width="270" height="316" fill="#d9d9d9" />
<rect x="1275" y="842" width="262" height="20" fill="#dd9035" />
<rect x="1275" y="866" width="262" height="260" fill="#e7e6e4" />
<rect x="1275" y="866" width="150" height="22" fill="#fff" />
<rect x="1427" y="866" width="110" height="22" fill="#fff" />
<rect x="1275" y="890" width="150" height="22" fill="#fff" />
<rect x="1427" y="890" width="110" height="22" fill="#fff" />
<rect x="1275" y="914" width="150" height="22" fill="#fff" />
<rect x="1427" y="914" width="110" height="22" fill="#fff" />
<rect x="1275" y="938" width="150" height="22" fill="#fff" />
<rect x="1427" y="938" width="110" height="22" fill="#fff" />
<rect x="1275" y="962" width="150" height="22" fill="#fff" />
<rect x="1427" y="962" width="110" height="22" fill="#fff" />
<rect x="1275" y="986" width="150" height="22" fill="#fff" />
<rect x="1427" y="986" width="110" height="22" fill="#fff" />
<rect x="1275" y="1010" width="150" height="22" fill="#fff" />
<rect x="1427" y="1010" width="110" height="22" fill="#fff" />
<rect x="1275" y="1034" width="150" height="22" fill="#fff" />
<rect x="1427" y="1034" width="110" height="22" fill="#fff" />
<rect x="1275" y="1058" width="150" height="22" fill="#fff" />
<rect x="1427" y="1058" width="110" height="22" fill="#fff" />
<rect x="1275" y="1082" width="150" height="22" fill="#fff" />
<rect x="1427" y="1082" width="110" height="22" fill="#fff" />
<rect x="1275" y="1106" width="150" height="20" fill="#fff" />
<rect x="1427" y="1106" width="110" height="20" fill="#fff" />
<rect x="1275" y="1130" width="262" height="20" fill="#f2f2f2" />
<text x="1406.6" y="857" font-family="Liberation Sans" font-size="20" font-weight="bold" fill="#fff" text-anchor="middle" textLength="136" lengthAdjust="spacingAndGlyphs" >Opłaty/Subskrypcje</text>
<text x="1278" y="1148" font-family="Liberation Sans" font-size="20.5" font-weight="bold" fill="#000" text-anchor="start" textLength="39" lengthAdjust="spacingAndGlyphs" >Suma</text>
<text x="1535.5" y="1148" font-family="Liberation Sans" font-size="20.5" font-weight="bold" fill="#000" text-anchor="end" textLength="29" lengthAdjust="spacingAndGlyphs" >0,00</text>
<rect x="1271" y="1174" width="270" height="220" fill="#d9d9d9" />
<rect x="1275" y="1178" width="262" height="22" fill="#dd9035" />
<rect x="1275" y="1200" width="262" height="166" fill="#e7e6e4" />
<rect x="1275" y="1202" width="150" height="22" fill="#f2f2f2" />
<rect x="1427" y="1202" width="110" height="22" fill="#f2f2f2" />
<rect x="1275" y="1226" width="150" height="22" fill="#fff" />
<rect x="1427" y="1226" width="110" height="22" fill="#fff" />
<rect x="1275" y="1250" width="150" height="22" fill="#fff" />
<rect x="1427" y="1250" width="110" height="22" fill="#fff" />
<rect x="1275" y="1274" width="150" height="22" fill="#fff" />
<rect x="1427" y="1274" width="110" height="22" fill="#fff" />
<rect x="1275" y="1298" width="150" height="22" fill="#fff" />
<rect x="1427" y="1298" width="110" height="22" fill="#fff" />
<rect x="1275" y="1322" width="150" height="22" fill="#fff" />
<rect x="1427" y="1322" width="110" height="22" fill="#fff" />
<rect x="1275" y="1346" width="150" height="20" fill="#fff" />
<rect x="1427" y="1346" width="110" height="20" fill="#fff" />
<rect x="1275" y="1370" width="262" height="20" fill="#f2f2f2" />
<text x="1407.6" y="1193.6" font-family="Liberation Sans" font-size="20" font-weight="bold" fill="#fff" text-anchor="middle" textLength="86" lengthAdjust="spacingAndGlyphs" >Inne wydatki</text>
<text x="1277.5" y="1219.6" font-family="Liberation Sans" font-size="20.3" font-weight="normal" fill="#000" text-anchor="start" textLength="91" lengthAdjust="spacingAndGlyphs" >Nieplanowane</text>
<text x="1278" y="1388" font-family="Liberation Sans" font-size="20.5" font-weight="bold" fill="#000" text-anchor="start" textLength="39" lengthAdjust="spacingAndGlyphs" >Suma</text>
<text x="1535.5" y="1388" font-family="Liberation Sans" font-size="20.5" font-weight="bold" fill="#000" text-anchor="end" textLength="29" lengthAdjust="spacingAndGlyphs" >0,00</text>
<rect x="1539" y="370" width="97.7" height="59.8" fill="none" stroke="#3a7a46" stroke-width="4"/>
<rect x="1629" y="421.8" width="12" height="12" fill="#ffffff" />
<rect x="1631" y="424" width="10" height="10" fill="#3a7a46" />
<rect x="0" y="1536" width="1645" height="57" fill="#f0f0f0" />
<rect x="0" y="1536" width="1645" height="2" fill="#c9ccc9" />
<path d="M35 1553 L20 1563 L35 1573 Z" fill="#b5b5b5"/>
<path d="M65 1553 L80 1563 L65 1573 Z" fill="#b5b5b5"/>
<rect x="109.10000000000001" y="1539" width="1.3" height="40" fill="#c8c8c8" />
<rect x="645.0" y="1539" width="1.3" height="40" fill="#c8c8c8" />
<rect x="813.0" y="1539" width="1.3" height="40" fill="#c8c8c8" />
<rect x="1009.0" y="1539" width="1.3" height="40" fill="#c8c8c8" />
<rect x="1166.9" y="1539" width="1.3" height="40" fill="#c8c8c8" />
<rect x="1357.0" y="1539" width="1.3" height="40" fill="#c8c8c8" />
<rect x="1432.7" y="1539" width="1.3" height="40" fill="#c8c8c8" />
<path d="M279 1536 V1575 Q279 1581 285 1581 H475 Q481 1581 481 1575 V1536" fill="#ffffff" stroke="#cfcfcf" stroke-width="1.2"/>
<rect x="280" y="1536" width="200.5" height="2" fill="#ffffff" />
<path d="M281 1582.2 H479" stroke="#dcdcdc" stroke-width="1.5"/>
<text x="143.8" y="1570" font-family="Liberation Sans" font-size="24" font-weight="normal" fill="#555555" text-anchor="start" textLength="99.7" lengthAdjust="spacingAndGlyphs"  stroke="#555555" stroke-width="0.6">Wrzesień</text>
<text x="516" y="1570" font-family="Liberation Sans" font-size="24" font-weight="normal" fill="#555555" text-anchor="start" textLength="94.7" lengthAdjust="spacingAndGlyphs"  stroke="#555555" stroke-width="0.6">Listopad</text>
<text x="680.5" y="1570" font-family="Liberation Sans" font-size="24" font-weight="normal" fill="#555555" text-anchor="start" textLength="98.2" lengthAdjust="spacingAndGlyphs"  stroke="#555555" stroke-width="0.6">Grudzień</text>
<text x="847.6" y="1570" font-family="Liberation Sans" font-size="24" font-weight="normal" fill="#555555" text-anchor="start" textLength="126.9" lengthAdjust="spacingAndGlyphs"  stroke="#555555" stroke-width="0.6">Styczeń_24</text>
<text x="1045.7" y="1570" font-family="Liberation Sans" font-size="24" font-weight="normal" fill="#555555" text-anchor="start" textLength="86.3" lengthAdjust="spacingAndGlyphs"  stroke="#555555" stroke-width="0.6">Luty_24</text>
<text x="1202.6" y="1570" font-family="Liberation Sans" font-size="24" font-weight="normal" fill="#555555" text-anchor="start" textLength="118.9" lengthAdjust="spacingAndGlyphs"  stroke="#555555" stroke-width="0.6">Marzec_24</text>
<text x="314" y="1570" font-family="Liberation Sans" font-size="24" font-weight="bold" fill="#3d8a4f" text-anchor="start" textLength="132" lengthAdjust="spacingAndGlyphs" >Październik</text>
<path d="M1387 1562 H1407 M1397 1552 V1572" stroke="#555" stroke-width="3"/>
<rect x="0" y="1587.5" width="1645" height="2" fill="#a8a8a8" />
<rect x="0" y="1589.5" width="1645" height="3.5" fill="#dcdcdc" /></svg></body></html>
